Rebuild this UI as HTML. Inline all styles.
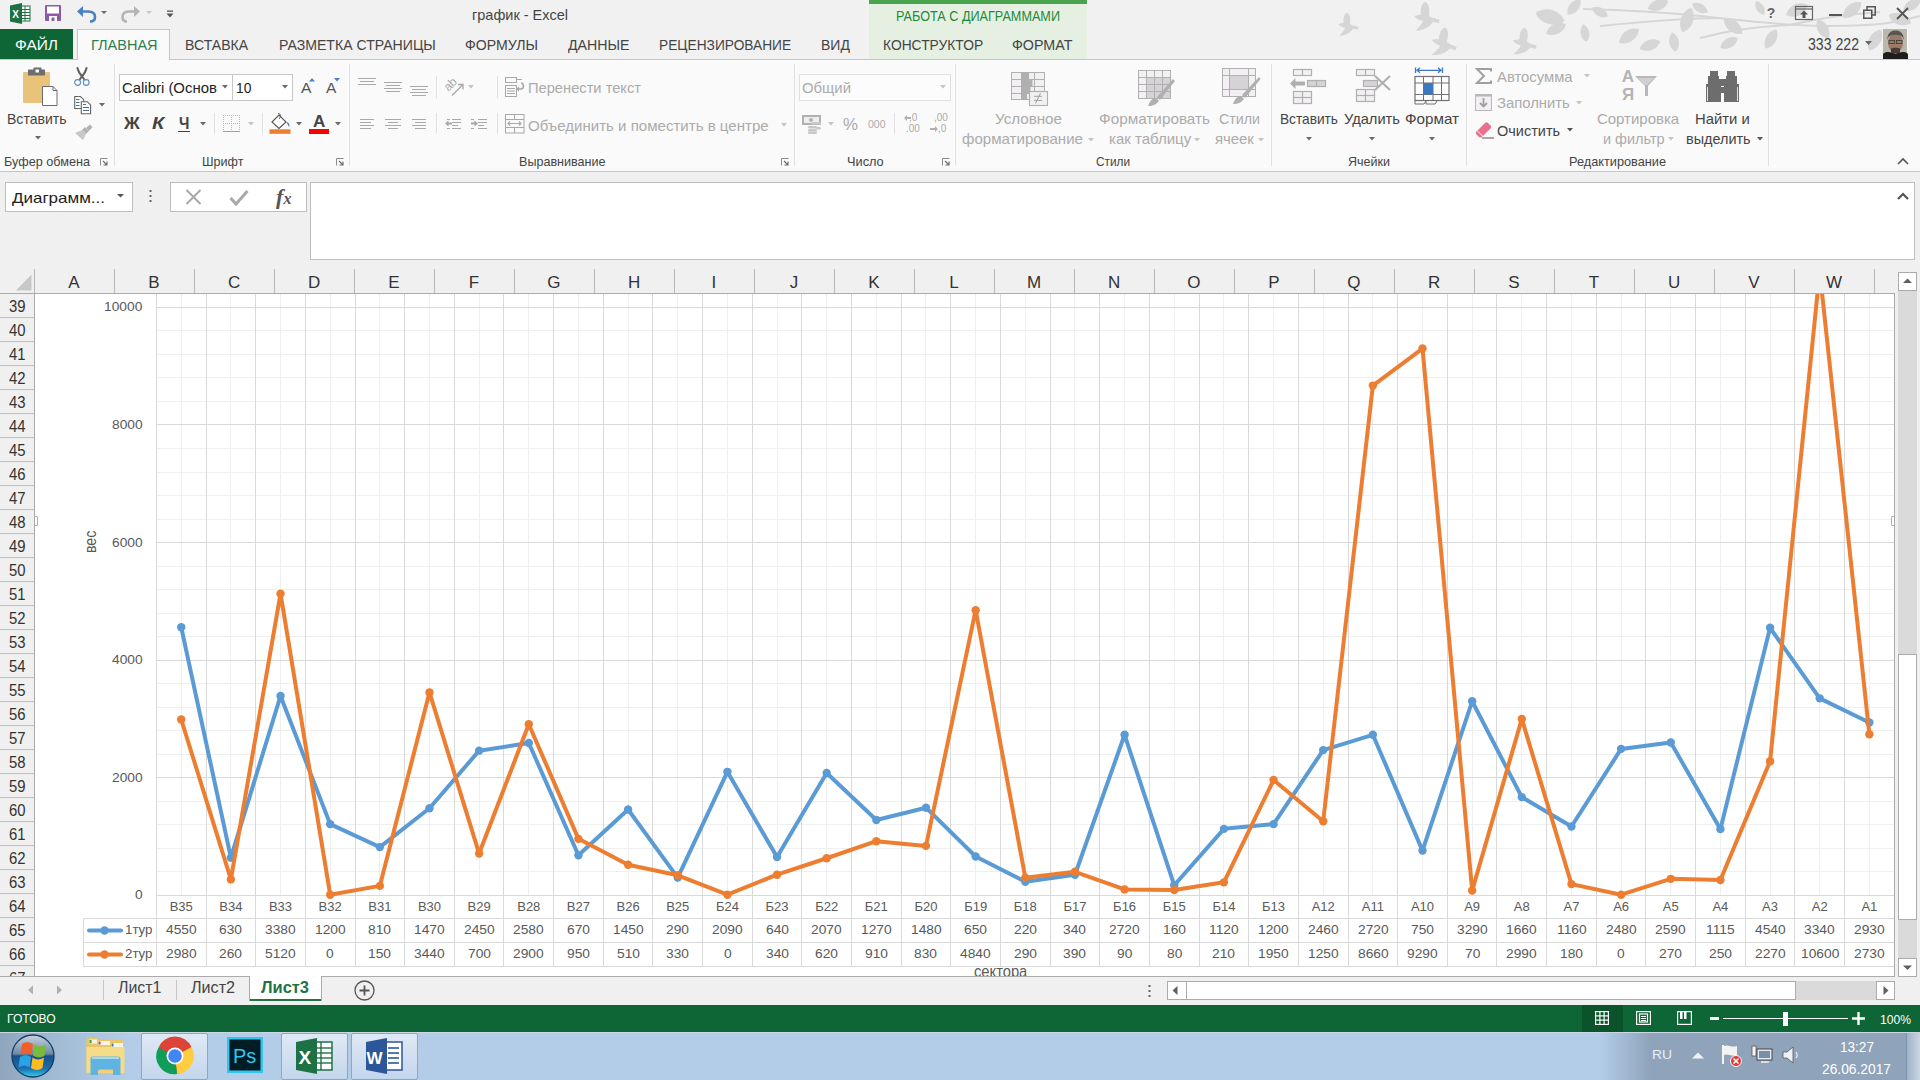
<!DOCTYPE html><html><head><meta charset="utf-8"><title>график - Excel</title><style>
*{margin:0;padding:0;box-sizing:border-box}
html,body{width:1920px;height:1080px;overflow:hidden;background:#f0f0f0;font-family:"Liberation Sans",sans-serif}
.t{position:absolute;white-space:nowrap;line-height:normal;transform-origin:0 0;font-family:"Liberation Sans",sans-serif}
svg{position:absolute;overflow:visible}
</style></head><body>
<div style="position:absolute;left:0px;top:0px;width:1920px;height:60px;background:#f1f1f1"></div>
<svg style="left:0;top:0" width="1920" height="59" viewBox="0 0 1920 59"><g fill="#d6d6d6">
<path transform="translate(1338 12) rotate(0) scale(0.8)" d="M0 15 C3 14 6 14 7 13 C6 8 8 2 11 1 C15 2 16 8 15 15 L19 17 L25.5 18.5 L25 22 L19 21 C17 24 12 29 2 30 C4 27 8 23 9 20 C6 19 2 18 0 15Z"/>
<path transform="translate(1414 1) rotate(0) scale(1.0)" d="M0 15 C3 14 6 14 7 13 C6 8 8 2 11 1 C15 2 16 8 15 15 L19 17 L25.5 18.5 L25 22 L19 21 C17 24 12 29 2 30 C4 27 8 23 9 20 C6 19 2 18 0 15Z"/>
<path transform="translate(1434 25) rotate(8) scale(1.0)" d="M0 15 C3 14 6 14 7 13 C6 8 8 2 11 1 C15 2 16 8 15 15 L19 17 L25.5 18.5 L25 22 L19 21 C17 24 12 29 2 30 C4 27 8 23 9 20 C6 19 2 18 0 15Z"/>
<path transform="translate(1514 26) rotate(5) scale(0.95)" d="M0 15 C3 14 6 14 7 13 C6 8 8 2 11 1 C15 2 16 8 15 15 L19 17 L25.5 18.5 L25 22 L19 21 C17 24 12 29 2 30 C4 27 8 23 9 20 C6 19 2 18 0 15Z"/>
<path transform="translate(1550 17) rotate(15)" d="M-15.0 0 C-7.5 -9.6 7.5 -9.6 15.0 0 C7.5 9.6 -7.5 9.6 -15.0 0Z"/>
<path transform="translate(1574 7) rotate(-50)" d="M-10.0 0 C-5.0 -6.4 5.0 -6.4 10.0 0 C5.0 6.4 -5.0 6.4 -10.0 0Z"/>
<path transform="translate(1556 29) rotate(-25)" d="M-11.0 0 C-5.5 -7.0 5.5 -7.0 11.0 0 C5.5 7.0 -5.5 7.0 -11.0 0Z"/>
<path transform="translate(1585 33) rotate(80)" d="M-9.0 0 C-4.5 -5.8 4.5 -5.8 9.0 0 C4.5 5.8 -4.5 5.8 -9.0 0Z"/>
<path transform="translate(1600 12) rotate(30)" d="M-9.0 0 C-4.5 -5.8 4.5 -5.8 9.0 0 C4.5 5.8 -4.5 5.8 -9.0 0Z"/>
<path transform="translate(1629 36) rotate(-35)" d="M-12.0 0 C-6.0 -7.7 6.0 -7.7 12.0 0 C6.0 7.7 -6.0 7.7 -12.0 0Z"/>
<path transform="translate(1650 45) rotate(-20)" d="M-11.0 0 C-5.5 -7.0 5.5 -7.0 11.0 0 C5.5 7.0 -5.5 7.0 -11.0 0Z"/>
<path transform="translate(1674 42) rotate(80)" d="M-10.0 0 C-5.0 -6.4 5.0 -6.4 10.0 0 C5.0 6.4 -5.0 6.4 -10.0 0Z"/>
<path transform="translate(1687 20) rotate(-70)" d="M-13.0 0 C-6.5 -8.3 6.5 -8.3 13.0 0 C6.5 8.3 -6.5 8.3 -13.0 0Z"/>
<path transform="translate(1658 5) rotate(-20)" d="M-11.0 0 C-5.5 -7.0 5.5 -7.0 11.0 0 C5.5 7.0 -5.5 7.0 -11.0 0Z"/>
<path transform="translate(1700 8) rotate(30)" d="M-9.0 0 C-4.5 -5.8 4.5 -5.8 9.0 0 C4.5 5.8 -4.5 5.8 -9.0 0Z"/>
<path transform="translate(1733 26) rotate(40)" d="M-12.0 0 C-6.0 -7.7 6.0 -7.7 12.0 0 C6.0 7.7 -6.0 7.7 -12.0 0Z"/>
<path transform="translate(1729 43) rotate(-30)" d="M-10.0 0 C-5.0 -6.4 5.0 -6.4 10.0 0 C5.0 6.4 -5.0 6.4 -10.0 0Z"/>
<path transform="translate(1771 39) rotate(-60)" d="M-11.0 0 C-5.5 -7.0 5.5 -7.0 11.0 0 C5.5 7.0 -5.5 7.0 -11.0 0Z"/>
<path transform="translate(1797 10) rotate(-25)" d="M-12.0 0 C-6.0 -7.7 6.0 -7.7 12.0 0 C6.0 7.7 -6.0 7.7 -12.0 0Z"/>
<path transform="translate(1823 29) rotate(60)" d="M-11.0 0 C-5.5 -7.0 5.5 -7.0 11.0 0 C5.5 7.0 -5.5 7.0 -11.0 0Z"/>
<path transform="translate(1852 10) rotate(-40)" d="M-12.0 0 C-6.0 -7.7 6.0 -7.7 12.0 0 C6.0 7.7 -6.0 7.7 -12.0 0Z"/>
<path transform="translate(1875 40) rotate(-60)" d="M-12.0 0 C-6.0 -7.7 6.0 -7.7 12.0 0 C6.0 7.7 -6.0 7.7 -12.0 0Z"/>
<path transform="translate(1900 19) rotate(20)" d="M-12.0 0 C-6.0 -7.7 6.0 -7.7 12.0 0 C6.0 7.7 -6.0 7.7 -12.0 0Z"/>
<path transform="translate(1912 5) rotate(-30)" d="M-10.0 0 C-5.0 -6.4 5.0 -6.4 10.0 0 C5.0 6.4 -5.0 6.4 -10.0 0Z"/>
<path transform="translate(1760 8) rotate(60)" d="M-8.0 0 C-4.0 -5.1 4.0 -5.1 8.0 0 C4.0 5.1 -4.0 5.1 -8.0 0Z"/>
</g><g stroke="#d6d6d6" stroke-width="2" fill="none">
<path d="M1583 9 C1620 10 1660 12 1700 16 S1780 26 1830 26 S1900 22 1920 16"/>
<path d="M1600 26 C1640 22 1680 18 1720 18"/><path d="M1700 38 C1730 30 1760 26 1790 25"/><path d="M1790 25 C1820 18 1850 14 1880 12"/>
</g></svg>
<svg style="left:10px;top:3px" width="21" height="21" viewBox="0 0 21 21">
<rect x="11" y="3" width="9" height="15" fill="#fff" stroke="#1e7145" stroke-width="1"/>
<g stroke="#1e7145" stroke-width="1"><line x1="11" y1="6.5" x2="20" y2="6.5"/><line x1="11" y1="9.5" x2="20" y2="9.5"/><line x1="11" y1="12.5" x2="20" y2="12.5"/><line x1="11" y1="15.5" x2="20" y2="15.5"/><line x1="15" y1="3" x2="15" y2="18"/></g>
<path d="M0 2.5 L12 0 L12 21 L0 18.5 Z" fill="#1e7145"/>
<text x="2.3" y="14.5" font-family="Liberation Sans" font-size="10" font-weight="bold" fill="#fff">X</text>
</svg>
<svg style="left:45px;top:5px" width="16" height="16" viewBox="0 0 16 16">
<rect x="0" y="0" width="16" height="16" rx="1" fill="#8d5aa8"/>
<rect x="2" y="1.5" width="12" height="7" fill="#fff"/>
<rect x="4" y="11" width="8" height="5" fill="#fff"/>
<rect x="6.5" y="12.5" width="3" height="3.5" fill="#8d5aa8"/>
</svg>
<svg style="left:76px;top:5px" width="34" height="18" viewBox="0 0 34 18">
<path d="M5 6.5 H12 C17 6.5 19 9 19 12 C19 15 17 16.5 14 16.5" stroke="#4a7fc1" stroke-width="2.6" fill="none"/>
<path d="M1 6.5 L7 1 L7 12 Z" fill="#4a7fc1"/>
<path d="M25 6 L31 6 L28 9 Z" fill="#6a6a6a"/>
</svg>
<svg style="left:121px;top:5px" width="34" height="18" viewBox="0 0 34 18">
<path d="M15 6.5 H8 C3 6.5 1.5 9 1.5 12 C1.5 15 3 16.5 6 16.5" stroke="#b4b4b4" stroke-width="2.6" fill="none"/>
<path d="M19 6.5 L13 1 L13 12 Z" fill="#b4b4b4"/>
<path d="M25 6 L31 6 L28 9 Z" fill="#c8c8c8"/>
</svg>
<svg style="left:166px;top:10px" width="8" height="8" viewBox="0 0 8 8">
<rect x="1" y="0.5" width="6" height="1.3" fill="#555"/><path d="M0.5 3.5 H7.5 L4 7.5Z" fill="#555"/></svg>
<div class="t" style="left:472.00px;top:6.22px;font-size:15px;color:#444;transform:scaleX(0.9653);">график - Excel</div>
<div style="position:absolute;left:869px;top:0px;width:218px;height:59px;background:#e5f0e3"></div>
<div style="position:absolute;left:869px;top:0px;width:218px;height:4px;background:#4aa44e"></div>
<div class="t" style="left:895.60px;top:7.73px;font-size:14px;color:#238a35;transform:scaleX(0.9032);">РАБОТА С ДИАГРАММАМИ</div>
<div class="t" style="left:1766.73px;top:5.33px;font-size:14px;color:#666;font-weight:bold;">?</div>
<svg style="left:1795px;top:6px" width="18" height="14" viewBox="0 0 18 14">
<rect x="0.5" y="0.5" width="17" height="13" fill="none" stroke="#666" stroke-width="1.2"/>
<line x1="1" y1="3" x2="17" y2="3" stroke="#666" stroke-width="1.2"/>
<path d="M9 4.5 L5 8.5 H7.5 V12 H10.5 V8.5 H13 Z" fill="#555"/></svg>
<div style="position:absolute;left:1829px;top:14px;width:13px;height:2px;background:#555"></div>
<svg style="left:1863px;top:6px" width="13" height="13" viewBox="0 0 13 13">
<rect x="0.75" y="4.25" width="8" height="8" fill="none" stroke="#555" stroke-width="1.5"/>
<path d="M4 4 V0.75 H12.25 V9 H9" fill="none" stroke="#555" stroke-width="1.5"/></svg>
<svg style="left:1896px;top:7px" width="13" height="13" viewBox="0 0 13 13">
<path d="M1 1 L12 12 M12 1 L1 12" stroke="#555" stroke-width="1.8"/></svg>
<div class="t" style="left:1808.00px;top:35.07px;font-size:16.5px;color:#444;transform:scaleX(0.8550);">333 222</div>
<svg style="left:1865px;top:41px" width="8" height="5"><path d="M0 0 H7 L3.5 4Z" fill="#666"/></svg>
<svg style="left:1883px;top:29px" width="25" height="30" viewBox="0 0 25 30">
<rect width="25" height="30" fill="#b9b7ae"/>
<rect x="24" y="0" width="1" height="30" fill="#fff"/>
<ellipse cx="12.5" cy="14" rx="7.5" ry="9.5" fill="#9c7a66"/>
<path d="M4.5 11 C4 4 8 1.5 12.5 1.5 C17 1.5 21 4 20.5 11 L19.5 8 C17 5 8 5 5.5 8Z" fill="#5a5550"/>
<rect x="6" y="11.5" width="5.5" height="3" fill="none" stroke="#3a3a3a" stroke-width="0.8"/><rect x="13.5" y="11.5" width="5.5" height="3" fill="none" stroke="#3a3a3a" stroke-width="0.8"/>
<path d="M8 19.5 C10 18.5 15 18.5 17 19.5 L17 23 C15 25 10 25 8 23Z" fill="#4a3a32"/>
<path d="M0 30 V25 C3 22 8 23 12.5 25 C17 23 22 22 25 25 V30Z" fill="#1e1e1e"/>
</svg>
<div style="position:absolute;left:0px;top:59px;width:1920px;height:1px;background:#c6c6c6"></div>
<div style="position:absolute;left:0px;top:29px;width:73px;height:30px;background:#0e6535"></div>
<div class="t" style="left:15.00px;top:35.82px;font-size:15px;color:#fff;transform:scaleX(1.0312);">ФАЙЛ</div>
<div style="position:absolute;left:77px;top:29px;width:93px;height:31px;background:#fafafa;border:1px solid #c6c6c6;border-bottom:none"></div>
<div class="t" style="left:90.50px;top:35.82px;font-size:15px;color:#2e7d50;transform:scaleX(0.9669);">ГЛАВНАЯ</div>
<div class="t" style="left:185.30px;top:35.82px;font-size:15px;color:#444;transform:scaleX(0.9394);">ВСТАВКА</div>
<div class="t" style="left:278.50px;top:35.82px;font-size:15px;color:#444;transform:scaleX(0.9392);">РАЗМЕТКА СТРАНИЦЫ</div>
<div class="t" style="left:465.20px;top:35.82px;font-size:15px;color:#444;transform:scaleX(0.9400);">ФОРМУЛЫ</div>
<div class="t" style="left:568.00px;top:35.82px;font-size:15px;color:#444;transform:scaleX(0.9447);">ДАННЫЕ</div>
<div class="t" style="left:659.20px;top:35.82px;font-size:15px;color:#444;transform:scaleX(0.9161);">РЕЦЕНЗИРОВАНИЕ</div>
<div class="t" style="left:821.40px;top:35.82px;font-size:15px;color:#444;transform:scaleX(0.9330);">ВИД</div>
<div class="t" style="left:882.50px;top:35.82px;font-size:15px;color:#444;transform:scaleX(0.9211);">КОНСТРУКТОР</div>
<div class="t" style="left:1012.00px;top:35.82px;font-size:15px;color:#444;transform:scaleX(0.9531);">ФОРМАТ</div>
<div style="position:absolute;left:0px;top:60px;width:1920px;height:111px;background:#fafafa"></div>
<div style="position:absolute;left:0px;top:171px;width:1920px;height:1px;background:#c6c6c6"></div>
<div style="position:absolute;left:114px;top:64px;width:1px;height:102px;background:#e1e1e1"></div>
<div style="position:absolute;left:349px;top:64px;width:1px;height:102px;background:#e1e1e1"></div>
<div style="position:absolute;left:794px;top:64px;width:1px;height:102px;background:#e1e1e1"></div>
<div style="position:absolute;left:955px;top:64px;width:1px;height:102px;background:#e1e1e1"></div>
<div style="position:absolute;left:1271px;top:64px;width:1px;height:102px;background:#e1e1e1"></div>
<div style="position:absolute;left:1466px;top:64px;width:1px;height:102px;background:#e1e1e1"></div>
<div style="position:absolute;left:1768px;top:64px;width:1px;height:102px;background:#e1e1e1"></div>
<div class="t" style="left:4.30px;top:154.24px;font-size:13px;color:#444;transform:scaleX(0.9740);">Буфер обмена</div>
<div class="t" style="left:201.50px;top:154.24px;font-size:13px;color:#444;transform:scaleX(0.9703);">Шрифт</div>
<div class="t" style="left:519.00px;top:154.24px;font-size:13px;color:#444;transform:scaleX(0.9664);">Выравнивание</div>
<div class="t" style="left:847.00px;top:154.24px;font-size:13px;color:#444;transform:scaleX(0.9819);">Число</div>
<div class="t" style="left:1096.00px;top:154.24px;font-size:13px;color:#444;transform:scaleX(0.9081);">Стили</div>
<div class="t" style="left:1348.00px;top:154.24px;font-size:13px;color:#444;transform:scaleX(0.9630);">Ячейки</div>
<div class="t" style="left:1569.00px;top:154.24px;font-size:13px;color:#444;transform:scaleX(0.9792);">Редактирование</div>
<svg style="left:100px;top:158px" width="8" height="8" viewBox="0 0 8 8"><path d="M0.5 7.5 V0.5 H7.5" fill="none" stroke="#8a8a8a" stroke-width="1"/><path d="M3 3 L6.5 6.5 M7 3.5 V7 H3.5" fill="none" stroke="#6a6a6a" stroke-width="1.1"/></svg>
<svg style="left:336px;top:158px" width="8" height="8" viewBox="0 0 8 8"><path d="M0.5 7.5 V0.5 H7.5" fill="none" stroke="#8a8a8a" stroke-width="1"/><path d="M3 3 L6.5 6.5 M7 3.5 V7 H3.5" fill="none" stroke="#6a6a6a" stroke-width="1.1"/></svg>
<svg style="left:781px;top:158px" width="8" height="8" viewBox="0 0 8 8"><path d="M0.5 7.5 V0.5 H7.5" fill="none" stroke="#8a8a8a" stroke-width="1"/><path d="M3 3 L6.5 6.5 M7 3.5 V7 H3.5" fill="none" stroke="#6a6a6a" stroke-width="1.1"/></svg>
<svg style="left:942px;top:158px" width="8" height="8" viewBox="0 0 8 8"><path d="M0.5 7.5 V0.5 H7.5" fill="none" stroke="#8a8a8a" stroke-width="1"/><path d="M3 3 L6.5 6.5 M7 3.5 V7 H3.5" fill="none" stroke="#6a6a6a" stroke-width="1.1"/></svg>
<svg style="left:1897px;top:157px" width="12" height="8"><path d="M1 7 L6 2 L11 7" fill="none" stroke="#555" stroke-width="1.6"/></svg>
<svg style="left:22px;top:67px" width="36" height="40" viewBox="0 0 36 40">
<rect x="1" y="5" width="27" height="31" rx="1" fill="#eac37a"/>
<rect x="6" y="2.5" width="17" height="6" rx="0.5" fill="#6d6d6d"/>
<rect x="11.5" y="0.5" width="8" height="5" rx="0.5" fill="#6d6d6d"/>
<rect x="13.5" y="2.5" width="3.5" height="3" fill="#fff"/>
<path d="M20.5 19.5 H31 L35 23.5 V38.5 H20.5 Z" fill="#fff" stroke="#6d6d6d" stroke-width="1"/>
<path d="M31 19.5 V23.5 H35" fill="none" stroke="#6d6d6d" stroke-width="1"/>
</svg>
<div class="t" style="left:7.00px;top:110.33px;font-size:15px;color:#444;transform:scaleX(0.9355);">Вставить</div>
<svg style="left:34.5px;top:136px" width="6" height="4"><path d="M0 0 H6 L3.0 3.5Z" fill="#6a6a6a"/></svg>
<svg style="left:70px;top:64px" width="24" height="24" viewBox="0 0 24 24">
<path d="M7.5 4 C8 7 10 10 12.5 13 L15 16.5 M16.5 4 C16 7 14 10 11.5 13 L9 16.5" stroke="#5f5f5f" stroke-width="2" fill="none" stroke-linecap="round"/>
<circle cx="7.6" cy="18.5" r="2.9" fill="#fff" stroke="#5a8ac6" stroke-width="1.1"/>
<circle cx="16.2" cy="18.5" r="2.9" fill="#fff" stroke="#5a8ac6" stroke-width="1.1"/>
</svg>
<svg style="left:70px;top:94px" width="24" height="22" viewBox="0 0 24 22">
<path d="M4.7 2.5 H10.5 L13.7 5.7 V14.5 H4.7Z" fill="#fff" stroke="#666" stroke-width="1.1"/>
<path d="M11.3 7.7 H17.3 L20.6 11 V19.7 H11.3Z" fill="#fff" stroke="#666" stroke-width="1.1"/>
<g stroke="#4f6f94" stroke-width="1"><line x1="6" y1="5.5" x2="9.5" y2="5.5"/><line x1="6" y1="8.5" x2="9.5" y2="8.5"/><line x1="6" y1="11.5" x2="9.5" y2="11.5"/>
<line x1="13" y1="10.5" x2="16" y2="10.5"/><line x1="13" y1="13.5" x2="19" y2="13.5"/><line x1="13" y1="16.5" x2="19" y2="16.5"/></g>
</svg>
<svg style="left:99px;top:103px" width="6" height="4"><path d="M0 0 H6 L3.0 3.5Z" fill="#6a6a6a"/></svg>
<svg style="left:74px;top:124px" width="19" height="17" viewBox="0 0 19 17">
<path d="M1 9 L8 6 L12 10 L9 16 Z" fill="#c8c8c8"/>
<path d="M8 6 L12 10 L15 7 L11 3Z" fill="#b3b3b3"/>
<path d="M12 4 L16 0.5 L18.5 3 L15 7Z" fill="#b3b3b3"/>
</svg>
<div style="position:absolute;left:119px;top:74px;width:114px;height:27px;background:#fff;border:1px solid #c6c6c6"></div>
<div style="position:absolute;left:232px;top:74px;width:61px;height:27px;background:#fff;border:1px solid #c6c6c6"></div>
<div class="t" style="left:122.30px;top:79.33px;font-size:15px;color:#222;transform:scaleX(0.9940);">Calibri (Основ</div>
<svg style="left:222px;top:85px" width="6" height="4"><path d="M0 0 H6 L3.0 3.5Z" fill="#6a6a6a"/></svg>
<div class="t" style="left:236.20px;top:79.33px;font-size:15px;color:#222;transform:scaleX(0.9189);">10</div>
<svg style="left:282px;top:85px" width="6" height="4"><path d="M0 0 H6 L3.0 3.5Z" fill="#6a6a6a"/></svg>
<div class="t" style="left:301.00px;top:79.33px;font-size:15px;color:#555;transform:scaleX(1.0448);">A</div>
<svg style="left:309px;top:78px" width="7" height="4"><path d="M0 3.5 H6 L3 0Z" fill="#4a7fc1"/></svg>
<div class="t" style="left:326.10px;top:79.33px;font-size:15px;color:#555;transform:scaleX(1.0348);">A</div>
<svg style="left:334px;top:78px" width="7" height="4"><path d="M0 0 H6 L3 3.5Z" fill="#4a7fc1"/></svg>
<div class="t" style="left:124.29px;top:115.42px;font-size:16px;color:#444;font-weight:bold;transform:scaleX(1.0861);">Ж</div>
<div class="t" style="left:151.70px;top:115.42px;font-size:16px;color:#444;font-weight:bold;transform:scaleX(1.2500);font-style:italic;">К</div>
<div class="t" style="left:178.60px;top:115.42px;font-size:16px;color:#444;font-weight:bold;transform:scaleX(0.9220);">Ч</div>
<div style="position:absolute;left:178px;top:131px;width:12px;height:1.3px;background:#444"></div>
<svg style="left:200px;top:122px" width="6" height="4"><path d="M0 0 H6 L3.0 3.5Z" fill="#6a6a6a"/></svg>
<div style="position:absolute;left:214px;top:113px;width:1px;height:21px;background:#e1e1e1"></div>
<svg style="left:223px;top:115px" width="17" height="17" viewBox="0 0 17 17">
<g stroke="#b8b8b8" stroke-width="1" stroke-dasharray="1 1" fill="none" shape-rendering="crispEdges">
<line x1="0.5" y1="0" x2="0.5" y2="16"/><line x1="16.5" y1="0" x2="16.5" y2="16"/><line x1="0" y1="0.5" x2="17" y2="0.5"/>
<line x1="8.5" y1="0" x2="8.5" y2="16"/><line x1="0" y1="8.5" x2="17" y2="8.5"/></g>
<line x1="0" y1="16.5" x2="17" y2="16.5" stroke="#a0a0a0" stroke-width="1" shape-rendering="crispEdges"/></svg>
<svg style="left:248px;top:122px" width="6" height="4"><path d="M0 0 H6 L3.0 3.5Z" fill="#c4c4c4"/></svg>
<div style="position:absolute;left:262px;top:113px;width:1px;height:21px;background:#e1e1e1"></div>
<svg style="left:269px;top:113px" width="22" height="21" viewBox="0 0 22 21">
<path d="M3 9 L10 2 L17 9 L10 15.5 Z" fill="#fff" stroke="#555" stroke-width="1.1"/>
<path d="M9 0.5 C12 0.5 12 4 10 6" fill="none" stroke="#555" stroke-width="1"/>
<path d="M17 9 C20 9 21 12 20 14 L18.5 11Z" fill="#4a7fc1"/>
<rect x="0.5" y="16.3" width="21" height="4.5" fill="#ed7d31"/></svg>
<svg style="left:296px;top:122px" width="6" height="4"><path d="M0 0 H6 L3.0 3.5Z" fill="#6a6a6a"/></svg>
<div class="t" style="left:312.70px;top:112.47px;font-size:16.5px;color:#444;font-weight:bold;transform:scaleX(1.0354);">A</div>
<div style="position:absolute;left:309px;top:129px;width:20px;height:5px;background:#ff0000"></div>
<svg style="left:335px;top:122px" width="6" height="4"><path d="M0 0 H6 L3.0 3.5Z" fill="#6a6a6a"/></svg>
<div style="position:absolute;left:358px;top:78px;width:18px;height:1px;background:#a8a8a8"></div>
<div style="position:absolute;left:360px;top:81px;width:14px;height:1px;background:#a8a8a8"></div>
<div style="position:absolute;left:358px;top:84px;width:18px;height:1px;background:#a8a8a8"></div>
<div style="position:absolute;left:384px;top:82px;width:18px;height:1px;background:#a8a8a8"></div>
<div style="position:absolute;left:386px;top:85px;width:14px;height:1px;background:#a8a8a8"></div>
<div style="position:absolute;left:384px;top:88px;width:18px;height:1px;background:#a8a8a8"></div>
<div style="position:absolute;left:386px;top:91px;width:14px;height:1px;background:#a8a8a8"></div>
<div style="position:absolute;left:410px;top:86px;width:18px;height:1px;background:#a8a8a8"></div>
<div style="position:absolute;left:412px;top:89px;width:14px;height:1px;background:#a8a8a8"></div>
<div style="position:absolute;left:410px;top:92px;width:18px;height:1px;background:#a8a8a8"></div>
<div style="position:absolute;left:412px;top:95px;width:14px;height:1px;background:#a8a8a8"></div>
<div style="position:absolute;left:360px;top:119px;width:14px;height:1px;background:#a8a8a8"></div>
<div style="position:absolute;left:360px;top:122px;width:11px;height:1px;background:#a8a8a8"></div>
<div style="position:absolute;left:360px;top:125px;width:14px;height:1px;background:#a8a8a8"></div>
<div style="position:absolute;left:360px;top:128px;width:11px;height:1px;background:#a8a8a8"></div>
<div style="position:absolute;left:385px;top:119px;width:16px;height:1px;background:#a8a8a8"></div>
<div style="position:absolute;left:388px;top:122px;width:10px;height:1px;background:#a8a8a8"></div>
<div style="position:absolute;left:385px;top:125px;width:16px;height:1px;background:#a8a8a8"></div>
<div style="position:absolute;left:388px;top:128px;width:10px;height:1px;background:#a8a8a8"></div>
<div style="position:absolute;left:412px;top:119px;width:14px;height:1px;background:#a8a8a8"></div>
<div style="position:absolute;left:415px;top:122px;width:11px;height:1px;background:#a8a8a8"></div>
<div style="position:absolute;left:412px;top:125px;width:14px;height:1px;background:#a8a8a8"></div>
<div style="position:absolute;left:415px;top:128px;width:11px;height:1px;background:#a8a8a8"></div>
<div style="position:absolute;left:436px;top:76px;width:1px;height:22px;background:#e1e1e1"></div>
<div style="position:absolute;left:436px;top:113px;width:1px;height:21px;background:#e1e1e1"></div>
<div style="position:absolute;left:497px;top:76px;width:1px;height:22px;background:#e1e1e1"></div>
<div style="position:absolute;left:497px;top:113px;width:1px;height:21px;background:#e1e1e1"></div>
<svg style="left:443px;top:77px" width="22" height="20" viewBox="0 0 22 20">
<text x="8" y="11" font-family="Liberation Sans" font-size="12" fill="#a8a8a8" text-anchor="middle" transform="rotate(-45 8 8)">ab</text>
<path d="M9 18.5 L19.5 8 M15 7.5 H20 V12.5" fill="none" stroke="#a8a8a8" stroke-width="1.3"/></svg>
<svg style="left:468px;top:85px" width="6" height="4"><path d="M0 0 H6 L3.0 3.5Z" fill="#c4c4c4"/></svg>
<svg style="left:445px;top:119px" width="19" height="11" viewBox="0 0 19 11"><g fill="#a8a8a8">
<rect x="2" y="0" width="3" height="1"/><rect x="7" y="0" width="9" height="1"/><rect x="7" y="3" width="9" height="1"/><rect x="7" y="6" width="6" height="1"/>
<rect x="2" y="9" width="3" height="1"/><rect x="7" y="9" width="9" height="1"/><path d="M0 4.5 L3.5 1.5 V3.5 H7 V5.5 H3.5 V7.5Z"/></g></svg>
<svg style="left:471px;top:119px" width="19" height="11" viewBox="0 0 19 11"><g fill="#a8a8a8">
<rect x="0" y="0" width="3" height="1"/><rect x="7" y="0" width="9" height="1"/><rect x="7" y="3" width="9" height="1"/><rect x="7" y="6" width="6" height="1"/>
<rect x="0" y="9" width="3" height="1"/><rect x="7" y="9" width="9" height="1"/><path d="M7 4.5 L3.5 1.5 V3.5 H0 V5.5 H3.5 V7.5Z"/></g></svg>
<svg style="left:505px;top:77px" width="21" height="20" viewBox="0 0 21 20">
<g fill="none" stroke="#a8a8a8" stroke-width="1">
<rect x="0.5" y="0.5" width="11" height="5"/><line x1="11.5" y1="2.5" x2="17" y2="2.5"/>
<rect x="0.5" y="8.5" width="11" height="11"/><line x1="2" y1="11.5" x2="10" y2="11.5"/><line x1="2" y1="14" x2="10" y2="14"/><line x1="2" y1="16.5" x2="10" y2="16.5"/>
<path d="M12 12 H16 C19 12 19.5 6 16 6" stroke-width="1.6"/></g>
<path d="M11 12 L14 9.5 V14.5Z" fill="#a8a8a8"/></svg>
<div class="t" style="left:528.00px;top:79.22px;font-size:15px;color:#ababab;transform:scaleX(0.9784);">Перенести текст</div>
<svg style="left:505px;top:114px" width="20" height="20" viewBox="0 0 20 20">
<g fill="none" stroke="#a8a8a8" stroke-width="1">
<rect x="0.5" y="0.5" width="18.5" height="18.5"/><line x1="0" y1="5.5" x2="19" y2="5.5"/><line x1="0" y1="13.5" x2="19" y2="13.5"/>
<line x1="9.5" y1="0" x2="9.5" y2="5.5"/><line x1="9.5" y1="13.5" x2="9.5" y2="19"/>
<path d="M3 9.5 H16 M5 7.5 L3 9.5 L5 11.5 M14 7.5 L16 9.5 L14 11.5" stroke-width="1.1"/></g></svg>
<div class="t" style="left:528.00px;top:116.73px;font-size:15px;color:#ababab;transform:scaleX(1.0034);">Объединить и поместить в центре</div>
<svg style="left:781px;top:123px" width="6" height="4"><path d="M0 0 H6 L3.0 3.5Z" fill="#c4c4c4"/></svg>
<div style="position:absolute;left:799px;top:74px;width:152px;height:27px;background:#fcfcfc;border:1px solid #e1e1e1"></div>
<div class="t" style="left:802.30px;top:79.33px;font-size:15px;color:#ababab;transform:scaleX(0.9929);">Общий</div>
<svg style="left:940px;top:85px" width="6" height="4"><path d="M0 0 H6 L3.0 3.5Z" fill="#c4c4c4"/></svg>
<svg style="left:802px;top:115px" width="20" height="19" viewBox="0 0 20 19">
<rect x="0" y="0" width="19" height="10" fill="#b0b0b0"/><rect x="2" y="2" width="15" height="6" fill="#eee"/>
<circle cx="9" cy="5" r="2" fill="#b0b0b0"/>
<g fill="#c8c8c8"><rect x="10" y="7" width="9" height="2.5" rx="1.2"/><rect x="6" y="11" width="9" height="2.5" rx="1.2"/><rect x="6" y="14" width="9" height="2.5" rx="1.2"/><rect x="6" y="16.5" width="9" height="2.5" rx="1.2"/><rect x="14" y="12" width="5" height="2.5" rx="1.2"/></g></svg>
<svg style="left:828px;top:122px" width="6" height="4"><path d="M0 0 H6 L3.0 3.5Z" fill="#c4c4c4"/></svg>
<div class="t" style="left:843.10px;top:115.31px;font-size:17px;color:#ababab;transform:scaleX(0.9914);">%</div>
<div class="t" style="left:867.60px;top:117.75px;font-size:11px;color:#ababab;transform:scaleX(0.9581);">000</div>
<div style="position:absolute;left:894px;top:113px;width:1px;height:21px;background:#e1e1e1"></div>
<div class="t" style="left:909.00px;top:112.45px;font-size:10px;color:#ababab;">,0</div>
<div class="t" style="left:906.00px;top:122.95px;font-size:10px;color:#ababab;">.00</div>
<svg style="left:904px;top:115px" width="7" height="6"><path d="M0 3 L3 0 V2 H7 V4 H3 V6Z" fill="#b0b0b0"/></svg>
<div class="t" style="left:934.00px;top:112.45px;font-size:10px;color:#ababab;">,00</div>
<div class="t" style="left:938.00px;top:122.95px;font-size:10px;color:#ababab;">,0</div>
<svg style="left:930px;top:126px" width="8" height="6"><path d="M8 3 L5 0 V2 H0 V4 H5 V6Z" fill="#b0b0b0"/></svg>
<svg style="left:1000px;top:60px" width="60" height="50" viewBox="1000 60 60 50">
<rect x="1011.5" y="72.5" width="33" height="27" fill="#f3f0f3" stroke="#b0b0b0" stroke-width="1"/>
<g fill="#b0b0b0"><rect x="1022" y="73" width="7" height="6.5"/><rect x="1022" y="80" width="10.5" height="6.5"/><rect x="1022" y="87" width="8.5" height="6.5"/><rect x="1022" y="94" width="5" height="6"/></g>
<g stroke="#b0b0b0" stroke-width="1" shape-rendering="crispEdges"><line x1="1011" y1="79.5" x2="1045" y2="79.5"/><line x1="1011" y1="86.5" x2="1045" y2="86.5"/><line x1="1011" y1="93.5" x2="1045" y2="93.5"/>
<line x1="1021.5" y1="72" x2="1021.5" y2="100"/><line x1="1034.5" y1="72" x2="1034.5" y2="100"/></g>
<rect x="1029.5" y="91.5" width="18" height="14" fill="#f3f0f3" stroke="#b0b0b0" stroke-width="1.1"/>
<path d="M1034 96.3 H1042 M1034 100.4 H1042 M1040.5 93 L1035.5 103.5" stroke="#a0a0a0" stroke-width="1"/></svg>
<svg style="left:1138px;top:70px" width="40" height="37" viewBox="0 0 40 37">
<rect x="0.5" y="0.5" width="32" height="28" fill="#f3f0f3" stroke="#b0b0b0"/>
<rect x="8" y="7" width="24" height="21" fill="#d6d3d6"/>
<g stroke="#b0b0b0" stroke-width="1"><line x1="0" y1="7.5" x2="33" y2="7.5"/><line x1="0" y1="14.5" x2="33" y2="14.5"/><line x1="0" y1="21.5" x2="33" y2="21.5"/>
<line x1="8.5" y1="0" x2="8.5" y2="29"/><line x1="16.5" y1="0" x2="16.5" y2="29"/><line x1="24.5" y1="0" x2="24.5" y2="29"/></g>
<path d="M10 36 C12 31 14 28 18 28 L21 31 C19 34 15 36 10 36Z" fill="#b0b0b0"/>
<path d="M19 27 L35 9 L37 11 L22 30Z" fill="#b0b0b0"/></svg>
<svg style="left:1222px;top:68px" width="40" height="37" viewBox="0 0 40 37">
<rect x="0.5" y="0.5" width="33" height="28" fill="#f3f0f3" stroke="#b0b0b0"/>
<rect x="7" y="7" width="19" height="14" fill="#d6d3d6"/>
<g stroke="#b0b0b0" stroke-width="1"><line x1="0" y1="7.5" x2="34" y2="7.5"/><line x1="0" y1="21.5" x2="34" y2="21.5"/>
<line x1="7.5" y1="0" x2="7.5" y2="29"/><line x1="26.5" y1="0" x2="26.5" y2="29"/></g>
<path d="M11 36 C13 31 15 28 19 28 L22 31 C20 34 16 36 11 36Z" fill="#b0b0b0"/>
<path d="M20 27 L37 9 L38.5 11 L23 30Z" fill="#b0b0b0"/></svg>
<div class="t" style="left:995.00px;top:110.42px;font-size:15px;color:#ababab;transform:scaleX(1.0117);">Условное</div>
<div class="t" style="left:962.00px;top:130.43px;font-size:15px;color:#ababab;transform:scaleX(1.0046);">форматирование</div>
<div class="t" style="left:1099.00px;top:110.42px;font-size:15px;color:#ababab;transform:scaleX(1.0200);">Форматировать</div>
<div class="t" style="left:1109.00px;top:130.43px;font-size:15px;color:#ababab;">как таблицу</div>
<div class="t" style="left:1219.00px;top:110.42px;font-size:15px;color:#ababab;transform:scaleX(0.9491);">Стили</div>
<div class="t" style="left:1215.00px;top:130.43px;font-size:15px;color:#ababab;transform:scaleX(0.9924);">ячеек</div>
<svg style="left:1088px;top:138px" width="6" height="4"><path d="M0 0 H6 L3.0 3.5Z" fill="#c4c4c4"/></svg>
<svg style="left:1194px;top:138px" width="6" height="4"><path d="M0 0 H6 L3.0 3.5Z" fill="#c4c4c4"/></svg>
<svg style="left:1258px;top:138px" width="6" height="4"><path d="M0 0 H6 L3.0 3.5Z" fill="#c4c4c4"/></svg>
<svg style="left:1289px;top:68px" width="40" height="37" viewBox="0 0 40 37">
<g fill="#f3f0f3" stroke="#b0b0b0" stroke-width="1.2">
<rect x="4.5" y="1.5" width="18" height="6"/><line x1="13.5" y1="1.5" x2="13.5" y2="7.5"/>
<rect x="4.5" y="23.5" width="18" height="12"/><line x1="13.5" y1="23.5" x2="13.5" y2="35.5"/><line x1="4.5" y1="29.5" x2="22.5" y2="29.5"/></g>
<rect x="18.5" y="12.5" width="18" height="6" fill="#d6d3d6" stroke="#b0b0b0" stroke-width="1.2"/><line x1="27.5" y1="12.5" x2="27.5" y2="18.5" stroke="#b0b0b0" stroke-width="1.2"/>
<path d="M1 15.5 L6.5 10 V13.5 H16 V17.5 H6.5 V21Z" fill="#b0b0b0"/></svg>
<svg style="left:1355px;top:68px" width="40" height="37" viewBox="0 0 40 37">
<g fill="#f3f0f3" stroke="#b0b0b0" stroke-width="1.2">
<rect x="1.5" y="1.5" width="18" height="6"/><line x1="10.5" y1="1.5" x2="10.5" y2="7.5"/>
<rect x="1.5" y="21.5" width="18" height="12"/><line x1="10.5" y1="21.5" x2="10.5" y2="33.5"/><line x1="1.5" y1="27.5" x2="19.5" y2="27.5"/></g>
<rect x="8.5" y="12.5" width="14" height="6" fill="#d6d3d6" stroke="#b0b0b0" stroke-width="1.2"/>
<path d="M20 8 L35 22 M35 8 L20 22" stroke="#b0b0b0" stroke-width="2.2"/></svg>
<svg style="left:1414px;top:67px" width="37" height="38" viewBox="0 0 37 38">
<path d="M1.5 0.5 V6 M28.5 0.5 V6 M3 3.3 H27 M6 0.8 L3 3.3 L6 5.8 M24 0.8 L27 3.3 L24 5.8" fill="none" stroke="#3c78c0" stroke-width="1.3"/>
<rect x="1" y="9.5" width="34" height="24" fill="#fff" stroke="#707070" stroke-width="1.2"/>
<g stroke="#707070" stroke-width="1"><line x1="1" y1="16" x2="35" y2="16"/><line x1="1" y1="27.5" x2="35" y2="27.5"/>
<line x1="9.5" y1="9.5" x2="9.5" y2="33.5"/><line x1="19" y1="9.5" x2="19" y2="33.5"/><line x1="27.5" y1="9.5" x2="27.5" y2="33.5"/></g>
<rect x="10" y="16" width="9" height="11.5" fill="#3c78c0"/>
<path d="M1 33.5 V37 H10 L12 34 M12 34 V37 H21 L23 34" fill="none" stroke="#707070" stroke-width="1"/></svg>
<div class="t" style="left:1280.00px;top:110.42px;font-size:15px;color:#444;transform:scaleX(0.9119);">Вставить</div>
<div class="t" style="left:1344.00px;top:110.42px;font-size:15px;color:#444;transform:scaleX(0.9773);">Удалить</div>
<div class="t" style="left:1405.00px;top:110.42px;font-size:15px;color:#444;transform:scaleX(1.0141);">Формат</div>
<svg style="left:1306px;top:137px" width="6" height="4"><path d="M0 0 H6 L3.0 3.5Z" fill="#6a6a6a"/></svg>
<svg style="left:1369px;top:137px" width="6" height="4"><path d="M0 0 H6 L3.0 3.5Z" fill="#6a6a6a"/></svg>
<svg style="left:1429px;top:137px" width="6" height="4"><path d="M0 0 H6 L3.0 3.5Z" fill="#6a6a6a"/></svg>
<svg style="left:1476px;top:68px" width="16" height="16" viewBox="0 0 16 16">
<path d="M15 3.5 V1 H1 L8 8 L1 15 H15 V12.5" fill="none" stroke="#a0a0a0" stroke-width="2"/></svg>
<div class="t" style="left:1497.40px;top:68.12px;font-size:15px;color:#ababab;transform:scaleX(0.9886);">Автосумма</div>
<svg style="left:1584px;top:74px" width="6" height="4"><path d="M0 0 H6 L3.0 3.5Z" fill="#c4c4c4"/></svg>
<svg style="left:1475px;top:94px" width="18" height="18" viewBox="0 0 18 18">
<rect x="0.5" y="0.5" width="16" height="16" fill="#f3f0f3" stroke="#b8b8b8"/><rect x="0.5" y="0.5" width="16" height="2" fill="#b8b8b8"/>
<path d="M8.5 4 V12 M5 9 L8.5 12.5 L12 9" fill="none" stroke="#a0a0a0" stroke-width="1.8"/></svg>
<div class="t" style="left:1497.40px;top:94.33px;font-size:15px;color:#ababab;transform:scaleX(0.9885);">Заполнить</div>
<svg style="left:1576px;top:101px" width="6" height="4"><path d="M0 0 H6 L3.0 3.5Z" fill="#c4c4c4"/></svg>
<svg style="left:1475px;top:121px" width="20" height="18" viewBox="0 0 20 18">
<path d="M1 11 L10 2 Q11.5 0.5 13 2 L15.5 4.5 Q17 6 15.5 7.5 L7 16 Q5.5 17.2 4 16 L1.5 13.5 Q0.2 12.2 1 11Z" fill="#e8718b"/>
<path d="M2.5 10 L8.5 16" stroke="#fff" stroke-width="1"/>
<line x1="7" y1="17" x2="19" y2="17" stroke="#555" stroke-width="1"/></svg>
<div class="t" style="left:1497.40px;top:122.02px;font-size:15px;color:#444;transform:scaleX(0.9659);">Очистить</div>
<svg style="left:1567px;top:128px" width="6" height="4"><path d="M0 0 H6 L3.0 3.5Z" fill="#555"/></svg>
<svg style="left:1621px;top:68px" width="38" height="33" viewBox="0 0 38 33">
<text x="7" y="14" font-family="Liberation Sans" font-size="17" font-weight="bold" fill="#b4b4b4" text-anchor="middle">А</text>
<text x="7" y="31.5" font-family="Liberation Sans" font-size="17" font-weight="bold" fill="#b4b4b4" text-anchor="middle">Я</text>
<path d="M14 8 H36 L27 18 V28 H24 V18Z" fill="#b8b8b8"/><path d="M17 10 H33 L26.5 17 H23.5Z" fill="#d0d0d0"/></svg>
<div class="t" style="left:1597.30px;top:110.42px;font-size:15px;color:#ababab;transform:scaleX(0.9970);">Сортировка</div>
<div class="t" style="left:1602.50px;top:130.12px;font-size:15px;color:#ababab;transform:scaleX(0.9656);">и фильтр</div>
<div class="t" style="left:1695.40px;top:110.42px;font-size:15px;color:#444;transform:scaleX(0.9901);">Найти и</div>
<div class="t" style="left:1685.60px;top:130.12px;font-size:15px;color:#444;transform:scaleX(0.9613);">выделить</div>
<svg style="left:1668px;top:137px" width="6" height="4"><path d="M0 0 H6 L3.0 3.5Z" fill="#c4c4c4"/></svg>
<svg style="left:1757px;top:137px" width="6" height="4"><path d="M0 0 H6 L3.0 3.5Z" fill="#555"/></svg>
<svg style="left:1705px;top:71px" width="36" height="31" viewBox="0 0 36 31">
<g fill="#6d6d6d">
<rect x="5" y="0" width="8" height="5"/><rect x="22" y="0" width="8" height="5"/>
<rect x="3" y="5" width="11" height="8"/><rect x="21" y="5" width="11" height="8"/>
<rect x="1" y="13" width="15" height="18"/><rect x="19" y="13" width="15" height="18"/>
<rect x="14" y="8" width="7" height="7"/><rect x="16" y="16" width="3" height="6"/></g>
<g stroke="#fff" stroke-width="0.8"><line x1="2.5" y1="16" x2="2.5" y2="30"/><line x1="32.5" y1="16" x2="32.5" y2="30"/></g></svg>
<div style="position:absolute;left:5px;top:182px;width:128px;height:30px;background:#fff;border:1px solid #bdbdbd"></div>
<div class="t" style="left:12.00px;top:189.43px;font-size:15px;color:#222;transform:scaleX(1.1314);">Диаграмм...</div>
<svg style="left:117px;top:194px" width="7" height="4"><path d="M0 0 H7 L3.5 3.5Z" fill="#555"/></svg>
<svg style="left:149px;top:190px" width="4" height="13"><g fill="#666"><rect x="0.5" y="0" width="2" height="2"/><rect x="0.5" y="5" width="2" height="2"/><rect x="0.5" y="10" width="2" height="2"/></g></svg>
<div style="position:absolute;left:170px;top:182px;width:137px;height:30px;background:#fff;border:1px solid #bdbdbd"></div>
<svg style="left:185px;top:189px" width="17" height="16"><path d="M1.5 1 L15.5 15 M15.5 1 L1.5 15" stroke="#a8a8a8" stroke-width="2"/></svg>
<svg style="left:229px;top:189px" width="20" height="17"><path d="M1.5 9 L7 15 L18.5 2" fill="none" stroke="#a8a8a8" stroke-width="3"/></svg>
<div class="t" style="left:276.00px;top:184.09px;font-size:22px;color:#555;font-weight:bold;font-family:'Liberation Serif';font-style:italic;">f</div>
<div class="t" style="left:283.50px;top:189.52px;font-size:16px;color:#555;font-weight:bold;font-family:'Liberation Serif';font-style:italic;">x</div>
<div style="position:absolute;left:310px;top:182px;width:1605px;height:78px;background:#fff;border:1px solid #bdbdbd"></div>
<svg style="left:1897px;top:192px" width="12" height="8"><path d="M1 7 L6 2 L11 7" fill="none" stroke="#555" stroke-width="2.2"/></svg>
<div style="position:absolute;left:0px;top:260px;width:1920px;height:33px;background:#f0f0f0"></div>
<svg style="left:16px;top:274px" width="16" height="17"><path d="M15.5 0.5 V16.5 H0 Z" fill="#c8c8c8"/></svg>
<div style="position:absolute;left:34px;top:269px;width:1px;height:24px;background:#b8b8b8"></div>
<div style="position:absolute;left:114px;top:269px;width:1px;height:24px;background:#b8b8b8"></div>
<div class="t" style="left:68.31px;top:272.62px;font-size:17px;color:#333;">A</div>
<div style="position:absolute;left:194px;top:269px;width:1px;height:24px;background:#b8b8b8"></div>
<div class="t" style="left:148.35px;top:272.62px;font-size:17px;color:#333;">B</div>
<div style="position:absolute;left:274px;top:269px;width:1px;height:24px;background:#b8b8b8"></div>
<div class="t" style="left:227.88px;top:272.62px;font-size:17px;color:#333;">C</div>
<div style="position:absolute;left:354px;top:269px;width:1px;height:24px;background:#b8b8b8"></div>
<div class="t" style="left:307.88px;top:272.62px;font-size:17px;color:#333;">D</div>
<div style="position:absolute;left:434px;top:269px;width:1px;height:24px;background:#b8b8b8"></div>
<div class="t" style="left:388.35px;top:272.62px;font-size:17px;color:#333;">E</div>
<div style="position:absolute;left:514px;top:269px;width:1px;height:24px;background:#b8b8b8"></div>
<div class="t" style="left:468.81px;top:272.62px;font-size:17px;color:#333;">F</div>
<div style="position:absolute;left:594px;top:269px;width:1px;height:24px;background:#b8b8b8"></div>
<div class="t" style="left:547.37px;top:272.62px;font-size:17px;color:#333;">G</div>
<div style="position:absolute;left:674px;top:269px;width:1px;height:24px;background:#b8b8b8"></div>
<div class="t" style="left:627.88px;top:272.62px;font-size:17px;color:#333;">H</div>
<div style="position:absolute;left:754px;top:269px;width:1px;height:24px;background:#b8b8b8"></div>
<div class="t" style="left:711.62px;top:272.62px;font-size:17px;color:#333;">I</div>
<div style="position:absolute;left:834px;top:269px;width:1px;height:24px;background:#b8b8b8"></div>
<div class="t" style="left:789.75px;top:272.62px;font-size:17px;color:#333;">J</div>
<div style="position:absolute;left:914px;top:269px;width:1px;height:24px;background:#b8b8b8"></div>
<div class="t" style="left:868.35px;top:272.62px;font-size:17px;color:#333;">K</div>
<div style="position:absolute;left:994px;top:269px;width:1px;height:24px;background:#b8b8b8"></div>
<div class="t" style="left:949.28px;top:272.62px;font-size:17px;color:#333;">L</div>
<div style="position:absolute;left:1074px;top:269px;width:1px;height:24px;background:#b8b8b8"></div>
<div class="t" style="left:1026.90px;top:272.62px;font-size:17px;color:#333;">M</div>
<div style="position:absolute;left:1154px;top:269px;width:1px;height:24px;background:#b8b8b8"></div>
<div class="t" style="left:1107.88px;top:272.62px;font-size:17px;color:#333;">N</div>
<div style="position:absolute;left:1234px;top:269px;width:1px;height:24px;background:#b8b8b8"></div>
<div class="t" style="left:1187.37px;top:272.62px;font-size:17px;color:#333;">O</div>
<div style="position:absolute;left:1314px;top:269px;width:1px;height:24px;background:#b8b8b8"></div>
<div class="t" style="left:1268.35px;top:272.62px;font-size:17px;color:#333;">P</div>
<div style="position:absolute;left:1394px;top:269px;width:1px;height:24px;background:#b8b8b8"></div>
<div class="t" style="left:1347.37px;top:272.62px;font-size:17px;color:#333;">Q</div>
<div style="position:absolute;left:1474px;top:269px;width:1px;height:24px;background:#b8b8b8"></div>
<div class="t" style="left:1427.88px;top:272.62px;font-size:17px;color:#333;">R</div>
<div style="position:absolute;left:1554px;top:269px;width:1px;height:24px;background:#b8b8b8"></div>
<div class="t" style="left:1508.35px;top:272.62px;font-size:17px;color:#333;">S</div>
<div style="position:absolute;left:1634px;top:269px;width:1px;height:24px;background:#b8b8b8"></div>
<div class="t" style="left:1588.82px;top:272.62px;font-size:17px;color:#333;">T</div>
<div style="position:absolute;left:1714px;top:269px;width:1px;height:24px;background:#b8b8b8"></div>
<div class="t" style="left:1667.88px;top:272.62px;font-size:17px;color:#333;">U</div>
<div style="position:absolute;left:1794px;top:269px;width:1px;height:24px;background:#b8b8b8"></div>
<div class="t" style="left:1748.35px;top:272.62px;font-size:17px;color:#333;">V</div>
<div style="position:absolute;left:1874px;top:269px;width:1px;height:24px;background:#b8b8b8"></div>
<div class="t" style="left:1825.97px;top:272.62px;font-size:17px;color:#333;">W</div>
<div style="position:absolute;left:0px;top:293px;width:1895px;height:1px;background:#ababab"></div>
<div style="position:absolute;left:0px;top:294px;width:34px;height:682px;background:#f0f0f0"></div>
<div style="position:absolute;left:34px;top:294px;width:1px;height:682px;background:#ababab"></div>
<div style="position:absolute;left:0px;top:317px;width:34px;height:1px;background:#c0c0c0"></div>
<div class="t" style="left:8.55px;top:296.62px;font-size:17px;color:#333;transform:scaleX(0.8744);">39</div>
<div style="position:absolute;left:0px;top:341px;width:34px;height:1px;background:#c0c0c0"></div>
<div class="t" style="left:8.55px;top:320.62px;font-size:17px;color:#333;transform:scaleX(0.8744);">40</div>
<div style="position:absolute;left:0px;top:365px;width:34px;height:1px;background:#c0c0c0"></div>
<div class="t" style="left:8.55px;top:344.62px;font-size:17px;color:#333;transform:scaleX(0.8744);">41</div>
<div style="position:absolute;left:0px;top:389px;width:34px;height:1px;background:#c0c0c0"></div>
<div class="t" style="left:8.55px;top:368.62px;font-size:17px;color:#333;transform:scaleX(0.8744);">42</div>
<div style="position:absolute;left:0px;top:413px;width:34px;height:1px;background:#c0c0c0"></div>
<div class="t" style="left:8.55px;top:392.62px;font-size:17px;color:#333;transform:scaleX(0.8744);">43</div>
<div style="position:absolute;left:0px;top:437px;width:34px;height:1px;background:#c0c0c0"></div>
<div class="t" style="left:8.55px;top:416.62px;font-size:17px;color:#333;transform:scaleX(0.8744);">44</div>
<div style="position:absolute;left:0px;top:461px;width:34px;height:1px;background:#c0c0c0"></div>
<div class="t" style="left:8.55px;top:440.62px;font-size:17px;color:#333;transform:scaleX(0.8744);">45</div>
<div style="position:absolute;left:0px;top:485px;width:34px;height:1px;background:#c0c0c0"></div>
<div class="t" style="left:8.55px;top:464.62px;font-size:17px;color:#333;transform:scaleX(0.8744);">46</div>
<div style="position:absolute;left:0px;top:509px;width:34px;height:1px;background:#c0c0c0"></div>
<div class="t" style="left:8.55px;top:488.62px;font-size:17px;color:#333;transform:scaleX(0.8744);">47</div>
<div style="position:absolute;left:0px;top:533px;width:34px;height:1px;background:#c0c0c0"></div>
<div class="t" style="left:8.55px;top:512.62px;font-size:17px;color:#333;transform:scaleX(0.8744);">48</div>
<div style="position:absolute;left:0px;top:557px;width:34px;height:1px;background:#c0c0c0"></div>
<div class="t" style="left:8.55px;top:536.62px;font-size:17px;color:#333;transform:scaleX(0.8744);">49</div>
<div style="position:absolute;left:0px;top:581px;width:34px;height:1px;background:#c0c0c0"></div>
<div class="t" style="left:8.55px;top:560.62px;font-size:17px;color:#333;transform:scaleX(0.8744);">50</div>
<div style="position:absolute;left:0px;top:605px;width:34px;height:1px;background:#c0c0c0"></div>
<div class="t" style="left:8.55px;top:584.62px;font-size:17px;color:#333;transform:scaleX(0.8744);">51</div>
<div style="position:absolute;left:0px;top:629px;width:34px;height:1px;background:#c0c0c0"></div>
<div class="t" style="left:8.55px;top:608.62px;font-size:17px;color:#333;transform:scaleX(0.8744);">52</div>
<div style="position:absolute;left:0px;top:653px;width:34px;height:1px;background:#c0c0c0"></div>
<div class="t" style="left:8.55px;top:632.62px;font-size:17px;color:#333;transform:scaleX(0.8744);">53</div>
<div style="position:absolute;left:0px;top:677px;width:34px;height:1px;background:#c0c0c0"></div>
<div class="t" style="left:8.55px;top:656.62px;font-size:17px;color:#333;transform:scaleX(0.8744);">54</div>
<div style="position:absolute;left:0px;top:701px;width:34px;height:1px;background:#c0c0c0"></div>
<div class="t" style="left:8.55px;top:680.62px;font-size:17px;color:#333;transform:scaleX(0.8744);">55</div>
<div style="position:absolute;left:0px;top:725px;width:34px;height:1px;background:#c0c0c0"></div>
<div class="t" style="left:8.55px;top:704.62px;font-size:17px;color:#333;transform:scaleX(0.8744);">56</div>
<div style="position:absolute;left:0px;top:749px;width:34px;height:1px;background:#c0c0c0"></div>
<div class="t" style="left:8.55px;top:728.62px;font-size:17px;color:#333;transform:scaleX(0.8744);">57</div>
<div style="position:absolute;left:0px;top:773px;width:34px;height:1px;background:#c0c0c0"></div>
<div class="t" style="left:8.55px;top:752.62px;font-size:17px;color:#333;transform:scaleX(0.8744);">58</div>
<div style="position:absolute;left:0px;top:797px;width:34px;height:1px;background:#c0c0c0"></div>
<div class="t" style="left:8.55px;top:776.62px;font-size:17px;color:#333;transform:scaleX(0.8744);">59</div>
<div style="position:absolute;left:0px;top:821px;width:34px;height:1px;background:#c0c0c0"></div>
<div class="t" style="left:8.55px;top:800.62px;font-size:17px;color:#333;transform:scaleX(0.8744);">60</div>
<div style="position:absolute;left:0px;top:845px;width:34px;height:1px;background:#c0c0c0"></div>
<div class="t" style="left:8.55px;top:824.62px;font-size:17px;color:#333;transform:scaleX(0.8744);">61</div>
<div style="position:absolute;left:0px;top:869px;width:34px;height:1px;background:#c0c0c0"></div>
<div class="t" style="left:8.55px;top:848.62px;font-size:17px;color:#333;transform:scaleX(0.8744);">62</div>
<div style="position:absolute;left:0px;top:893px;width:34px;height:1px;background:#c0c0c0"></div>
<div class="t" style="left:8.55px;top:872.62px;font-size:17px;color:#333;transform:scaleX(0.8744);">63</div>
<div style="position:absolute;left:0px;top:917px;width:34px;height:1px;background:#c0c0c0"></div>
<div class="t" style="left:8.55px;top:896.62px;font-size:17px;color:#333;transform:scaleX(0.8744);">64</div>
<div style="position:absolute;left:0px;top:941px;width:34px;height:1px;background:#c0c0c0"></div>
<div class="t" style="left:8.55px;top:920.62px;font-size:17px;color:#333;transform:scaleX(0.8744);">65</div>
<div style="position:absolute;left:0px;top:965px;width:34px;height:1px;background:#c0c0c0"></div>
<div class="t" style="left:8.55px;top:944.62px;font-size:17px;color:#333;transform:scaleX(0.8744);">66</div>
<div class="t" style="left:8.55px;top:968.62px;font-size:17px;color:#333;transform:scaleX(0.8744);">67</div>
<div style="position:absolute;left:0px;top:976px;width:34px;height:120px;background:#f0f0f0"></div>
<div style="position:absolute;left:35px;top:294px;width:1859px;height:682px;background:#fff"></div>
<div style="position:absolute;left:1894px;top:293px;width:1px;height:684px;background:#ababab"></div>
<div style="position:absolute;left:0px;top:976px;width:1895px;height:1px;background:#ababab"></div>
<svg style="left:0;top:0" width="1920" height="1080" viewBox="0 0 1920 1080">
<defs><clipPath id="sc"><rect x="35" y="294" width="1859" height="682"/></clipPath></defs>
<g clip-path="url(#sc)">
<g shape-rendering="crispEdges">
<rect x="156" y="871" width="1738" height="1" fill="#efefef"/>
<rect x="156" y="848" width="1738" height="1" fill="#efefef"/>
<rect x="156" y="824" width="1738" height="1" fill="#efefef"/>
<rect x="156" y="801" width="1738" height="1" fill="#efefef"/>
<rect x="156" y="754" width="1738" height="1" fill="#efefef"/>
<rect x="156" y="730" width="1738" height="1" fill="#efefef"/>
<rect x="156" y="707" width="1738" height="1" fill="#efefef"/>
<rect x="156" y="683" width="1738" height="1" fill="#efefef"/>
<rect x="156" y="636" width="1738" height="1" fill="#efefef"/>
<rect x="156" y="613" width="1738" height="1" fill="#efefef"/>
<rect x="156" y="589" width="1738" height="1" fill="#efefef"/>
<rect x="156" y="566" width="1738" height="1" fill="#efefef"/>
<rect x="156" y="519" width="1738" height="1" fill="#efefef"/>
<rect x="156" y="495" width="1738" height="1" fill="#efefef"/>
<rect x="156" y="472" width="1738" height="1" fill="#efefef"/>
<rect x="156" y="448" width="1738" height="1" fill="#efefef"/>
<rect x="156" y="401" width="1738" height="1" fill="#efefef"/>
<rect x="156" y="377" width="1738" height="1" fill="#efefef"/>
<rect x="156" y="354" width="1738" height="1" fill="#efefef"/>
<rect x="156" y="330" width="1738" height="1" fill="#efefef"/>
<rect x="181" y="294" width="1" height="601" fill="#efefef"/>
<rect x="230" y="294" width="1" height="601" fill="#efefef"/>
<rect x="280" y="294" width="1" height="601" fill="#efefef"/>
<rect x="330" y="294" width="1" height="601" fill="#efefef"/>
<rect x="379" y="294" width="1" height="601" fill="#efefef"/>
<rect x="429" y="294" width="1" height="601" fill="#efefef"/>
<rect x="479" y="294" width="1" height="601" fill="#efefef"/>
<rect x="528" y="294" width="1" height="601" fill="#efefef"/>
<rect x="578" y="294" width="1" height="601" fill="#efefef"/>
<rect x="628" y="294" width="1" height="601" fill="#efefef"/>
<rect x="677" y="294" width="1" height="601" fill="#efefef"/>
<rect x="727" y="294" width="1" height="601" fill="#efefef"/>
<rect x="777" y="294" width="1" height="601" fill="#efefef"/>
<rect x="826" y="294" width="1" height="601" fill="#efefef"/>
<rect x="876" y="294" width="1" height="601" fill="#efefef"/>
<rect x="925" y="294" width="1" height="601" fill="#efefef"/>
<rect x="975" y="294" width="1" height="601" fill="#efefef"/>
<rect x="1025" y="294" width="1" height="601" fill="#efefef"/>
<rect x="1074" y="294" width="1" height="601" fill="#efefef"/>
<rect x="1124" y="294" width="1" height="601" fill="#efefef"/>
<rect x="1174" y="294" width="1" height="601" fill="#efefef"/>
<rect x="1223" y="294" width="1" height="601" fill="#efefef"/>
<rect x="1273" y="294" width="1" height="601" fill="#efefef"/>
<rect x="1323" y="294" width="1" height="601" fill="#efefef"/>
<rect x="1372" y="294" width="1" height="601" fill="#efefef"/>
<rect x="1422" y="294" width="1" height="601" fill="#efefef"/>
<rect x="1472" y="294" width="1" height="601" fill="#efefef"/>
<rect x="1521" y="294" width="1" height="601" fill="#efefef"/>
<rect x="1571" y="294" width="1" height="601" fill="#efefef"/>
<rect x="1621" y="294" width="1" height="601" fill="#efefef"/>
<rect x="1670" y="294" width="1" height="601" fill="#efefef"/>
<rect x="1720" y="294" width="1" height="601" fill="#efefef"/>
<rect x="1770" y="294" width="1" height="601" fill="#efefef"/>
<rect x="1819" y="294" width="1" height="601" fill="#efefef"/>
<rect x="1869" y="294" width="1" height="601" fill="#efefef"/>
<rect x="156" y="895" width="1738" height="1" fill="#d9d9d9"/>
<rect x="156" y="777" width="1738" height="1" fill="#d9d9d9"/>
<rect x="156" y="660" width="1738" height="1" fill="#d9d9d9"/>
<rect x="156" y="542" width="1738" height="1" fill="#d9d9d9"/>
<rect x="156" y="424" width="1738" height="1" fill="#d9d9d9"/>
<rect x="156" y="307" width="1738" height="1" fill="#d9d9d9"/>
<rect x="156" y="294" width="1" height="672" fill="#d9d9d9"/>
<rect x="206" y="294" width="1" height="672" fill="#d9d9d9"/>
<rect x="255" y="294" width="1" height="672" fill="#d9d9d9"/>
<rect x="305" y="294" width="1" height="672" fill="#d9d9d9"/>
<rect x="355" y="294" width="1" height="672" fill="#d9d9d9"/>
<rect x="404" y="294" width="1" height="672" fill="#d9d9d9"/>
<rect x="454" y="294" width="1" height="672" fill="#d9d9d9"/>
<rect x="503" y="294" width="1" height="672" fill="#d9d9d9"/>
<rect x="553" y="294" width="1" height="672" fill="#d9d9d9"/>
<rect x="603" y="294" width="1" height="672" fill="#d9d9d9"/>
<rect x="652" y="294" width="1" height="672" fill="#d9d9d9"/>
<rect x="702" y="294" width="1" height="672" fill="#d9d9d9"/>
<rect x="752" y="294" width="1" height="672" fill="#d9d9d9"/>
<rect x="801" y="294" width="1" height="672" fill="#d9d9d9"/>
<rect x="851" y="294" width="1" height="672" fill="#d9d9d9"/>
<rect x="901" y="294" width="1" height="672" fill="#d9d9d9"/>
<rect x="950" y="294" width="1" height="672" fill="#d9d9d9"/>
<rect x="1000" y="294" width="1" height="672" fill="#d9d9d9"/>
<rect x="1050" y="294" width="1" height="672" fill="#d9d9d9"/>
<rect x="1099" y="294" width="1" height="672" fill="#d9d9d9"/>
<rect x="1149" y="294" width="1" height="672" fill="#d9d9d9"/>
<rect x="1199" y="294" width="1" height="672" fill="#d9d9d9"/>
<rect x="1248" y="294" width="1" height="672" fill="#d9d9d9"/>
<rect x="1298" y="294" width="1" height="672" fill="#d9d9d9"/>
<rect x="1348" y="294" width="1" height="672" fill="#d9d9d9"/>
<rect x="1397" y="294" width="1" height="672" fill="#d9d9d9"/>
<rect x="1447" y="294" width="1" height="672" fill="#d9d9d9"/>
<rect x="1496" y="294" width="1" height="672" fill="#d9d9d9"/>
<rect x="1546" y="294" width="1" height="672" fill="#d9d9d9"/>
<rect x="1596" y="294" width="1" height="672" fill="#d9d9d9"/>
<rect x="1645" y="294" width="1" height="672" fill="#d9d9d9"/>
<rect x="1695" y="294" width="1" height="672" fill="#d9d9d9"/>
<rect x="1745" y="294" width="1" height="672" fill="#d9d9d9"/>
<rect x="1794" y="294" width="1" height="672" fill="#d9d9d9"/>
<rect x="1844" y="294" width="1" height="672" fill="#d9d9d9"/>
<rect x="1894" y="294" width="1" height="672" fill="#d9d9d9"/>
<rect x="83" y="918" width="1811" height="1" fill="#d9d9d9"/>
<rect x="83" y="942" width="1811" height="1" fill="#d9d9d9"/>
<rect x="83" y="966" width="1811" height="1" fill="#d9d9d9"/>
<rect x="83" y="918" width="1" height="49" fill="#d9d9d9"/>
</g>
<polyline points="181.23,627.21 230.88,857.66 280.53,695.99 330.18,824.15 379.83,847.08 429.48,808.28 479.13,750.66 528.79,743.02 578.44,855.31 628.09,809.45 677.74,877.65 727.39,771.83 777.04,857.07 826.69,773.00 876.35,820.04 926.00,807.69 975.65,856.49 1025.30,881.77 1074.95,874.71 1124.60,734.79 1174.25,885.29 1223.91,828.86 1273.56,824.15 1323.21,750.08 1372.86,734.79 1422.51,850.61 1472.16,701.28 1521.81,797.11 1571.47,826.50 1621.12,748.90 1670.77,742.43 1720.42,829.15 1770.07,627.79 1819.72,698.34 1869.37,722.45" fill="none" stroke="#5b9bd5" stroke-width="4" stroke-linejoin="round" stroke-linecap="round"/>
<circle cx="181.23" cy="627.21" r="4.2" fill="#5b9bd5"/>
<circle cx="230.88" cy="857.66" r="4.2" fill="#5b9bd5"/>
<circle cx="280.53" cy="695.99" r="4.2" fill="#5b9bd5"/>
<circle cx="330.18" cy="824.15" r="4.2" fill="#5b9bd5"/>
<circle cx="379.83" cy="847.08" r="4.2" fill="#5b9bd5"/>
<circle cx="429.48" cy="808.28" r="4.2" fill="#5b9bd5"/>
<circle cx="479.13" cy="750.66" r="4.2" fill="#5b9bd5"/>
<circle cx="528.79" cy="743.02" r="4.2" fill="#5b9bd5"/>
<circle cx="578.44" cy="855.31" r="4.2" fill="#5b9bd5"/>
<circle cx="628.09" cy="809.45" r="4.2" fill="#5b9bd5"/>
<circle cx="677.74" cy="877.65" r="4.2" fill="#5b9bd5"/>
<circle cx="727.39" cy="771.83" r="4.2" fill="#5b9bd5"/>
<circle cx="777.04" cy="857.07" r="4.2" fill="#5b9bd5"/>
<circle cx="826.69" cy="773.00" r="4.2" fill="#5b9bd5"/>
<circle cx="876.35" cy="820.04" r="4.2" fill="#5b9bd5"/>
<circle cx="926.00" cy="807.69" r="4.2" fill="#5b9bd5"/>
<circle cx="975.65" cy="856.49" r="4.2" fill="#5b9bd5"/>
<circle cx="1025.30" cy="881.77" r="4.2" fill="#5b9bd5"/>
<circle cx="1074.95" cy="874.71" r="4.2" fill="#5b9bd5"/>
<circle cx="1124.60" cy="734.79" r="4.2" fill="#5b9bd5"/>
<circle cx="1174.25" cy="885.29" r="4.2" fill="#5b9bd5"/>
<circle cx="1223.91" cy="828.86" r="4.2" fill="#5b9bd5"/>
<circle cx="1273.56" cy="824.15" r="4.2" fill="#5b9bd5"/>
<circle cx="1323.21" cy="750.08" r="4.2" fill="#5b9bd5"/>
<circle cx="1372.86" cy="734.79" r="4.2" fill="#5b9bd5"/>
<circle cx="1422.51" cy="850.61" r="4.2" fill="#5b9bd5"/>
<circle cx="1472.16" cy="701.28" r="4.2" fill="#5b9bd5"/>
<circle cx="1521.81" cy="797.11" r="4.2" fill="#5b9bd5"/>
<circle cx="1571.47" cy="826.50" r="4.2" fill="#5b9bd5"/>
<circle cx="1621.12" cy="748.90" r="4.2" fill="#5b9bd5"/>
<circle cx="1670.77" cy="742.43" r="4.2" fill="#5b9bd5"/>
<circle cx="1720.42" cy="829.15" r="4.2" fill="#5b9bd5"/>
<circle cx="1770.07" cy="627.79" r="4.2" fill="#5b9bd5"/>
<circle cx="1819.72" cy="698.34" r="4.2" fill="#5b9bd5"/>
<circle cx="1869.37" cy="722.45" r="4.2" fill="#5b9bd5"/>
<polyline points="181.23,719.51 230.88,879.41 280.53,593.70 330.18,894.70 379.83,885.88 429.48,692.46 479.13,853.55 528.79,724.21 578.44,838.85 628.09,864.72 677.74,875.30 727.39,894.70 777.04,874.71 826.69,858.25 876.35,841.20 926.00,845.90 975.65,610.16 1025.30,877.65 1074.95,871.77 1124.60,889.41 1174.25,890.00 1223.91,882.35 1273.56,780.06 1323.21,821.21 1372.86,385.58 1422.51,348.54 1472.16,890.58 1521.81,718.92 1571.47,884.12 1621.12,894.70 1670.77,878.83 1720.42,880.00 1770.07,761.25 1819.72,271.53 1869.37,734.20" fill="none" stroke="#ed7d31" stroke-width="4" stroke-linejoin="round" stroke-linecap="round"/>
<circle cx="181.23" cy="719.51" r="4.2" fill="#ed7d31"/>
<circle cx="230.88" cy="879.41" r="4.2" fill="#ed7d31"/>
<circle cx="280.53" cy="593.70" r="4.2" fill="#ed7d31"/>
<circle cx="330.18" cy="894.70" r="4.2" fill="#ed7d31"/>
<circle cx="379.83" cy="885.88" r="4.2" fill="#ed7d31"/>
<circle cx="429.48" cy="692.46" r="4.2" fill="#ed7d31"/>
<circle cx="479.13" cy="853.55" r="4.2" fill="#ed7d31"/>
<circle cx="528.79" cy="724.21" r="4.2" fill="#ed7d31"/>
<circle cx="578.44" cy="838.85" r="4.2" fill="#ed7d31"/>
<circle cx="628.09" cy="864.72" r="4.2" fill="#ed7d31"/>
<circle cx="677.74" cy="875.30" r="4.2" fill="#ed7d31"/>
<circle cx="727.39" cy="894.70" r="4.2" fill="#ed7d31"/>
<circle cx="777.04" cy="874.71" r="4.2" fill="#ed7d31"/>
<circle cx="826.69" cy="858.25" r="4.2" fill="#ed7d31"/>
<circle cx="876.35" cy="841.20" r="4.2" fill="#ed7d31"/>
<circle cx="926.00" cy="845.90" r="4.2" fill="#ed7d31"/>
<circle cx="975.65" cy="610.16" r="4.2" fill="#ed7d31"/>
<circle cx="1025.30" cy="877.65" r="4.2" fill="#ed7d31"/>
<circle cx="1074.95" cy="871.77" r="4.2" fill="#ed7d31"/>
<circle cx="1124.60" cy="889.41" r="4.2" fill="#ed7d31"/>
<circle cx="1174.25" cy="890.00" r="4.2" fill="#ed7d31"/>
<circle cx="1223.91" cy="882.35" r="4.2" fill="#ed7d31"/>
<circle cx="1273.56" cy="780.06" r="4.2" fill="#ed7d31"/>
<circle cx="1323.21" cy="821.21" r="4.2" fill="#ed7d31"/>
<circle cx="1372.86" cy="385.58" r="4.2" fill="#ed7d31"/>
<circle cx="1422.51" cy="348.54" r="4.2" fill="#ed7d31"/>
<circle cx="1472.16" cy="890.58" r="4.2" fill="#ed7d31"/>
<circle cx="1521.81" cy="718.92" r="4.2" fill="#ed7d31"/>
<circle cx="1571.47" cy="884.12" r="4.2" fill="#ed7d31"/>
<circle cx="1621.12" cy="894.70" r="4.2" fill="#ed7d31"/>
<circle cx="1670.77" cy="878.83" r="4.2" fill="#ed7d31"/>
<circle cx="1720.42" cy="880.00" r="4.2" fill="#ed7d31"/>
<circle cx="1770.07" cy="761.25" r="4.2" fill="#ed7d31"/>
<circle cx="1819.72" cy="271.53" r="4.2" fill="#ed7d31"/>
<circle cx="1869.37" cy="734.20" r="4.2" fill="#ed7d31"/>
<line x1="89" y1="930.5" x2="121" y2="930.5" stroke="#5b9bd5" stroke-width="4" stroke-linecap="round"/><circle cx="104.5" cy="930.5" r="4.2" fill="#5b9bd5"/>
<line x1="89" y1="954.5" x2="121" y2="954.5" stroke="#ed7d31" stroke-width="4" stroke-linecap="round"/><circle cx="104.5" cy="954.5" r="4.2" fill="#ed7d31"/>
</g></svg>
<div style="position:absolute;left:35px;top:294px;width:1859px;height:682px;overflow:hidden">
<div class="t" style="left:99.95px;top:593.33px;font-size:13px;color:#595959;transform:scaleX(1.0600);">0</div>
<div class="t" style="left:76.94px;top:475.75px;font-size:13px;color:#595959;transform:scaleX(1.0600);">2000</div>
<div class="t" style="left:76.94px;top:358.17px;font-size:13px;color:#595959;transform:scaleX(1.0600);">4000</div>
<div class="t" style="left:76.94px;top:240.59px;font-size:13px;color:#595959;transform:scaleX(1.0600);">6000</div>
<div class="t" style="left:76.94px;top:123.02px;font-size:13px;color:#595959;transform:scaleX(1.0600);">8000</div>
<div class="t" style="left:69.29px;top:5.43px;font-size:13px;color:#595959;transform:scaleX(1.0600);">10000</div>
<div class="t" style="left:134.66px;top:605.24px;font-size:13px;color:#595959;">В35</div>
<div class="t" style="left:130.90px;top:628.34px;font-size:13px;color:#595959;transform:scaleX(1.0600);">4550</div>
<div class="t" style="left:130.90px;top:652.03px;font-size:13px;color:#595959;transform:scaleX(1.0600);">2980</div>
<div class="t" style="left:184.31px;top:605.24px;font-size:13px;color:#595959;">В34</div>
<div class="t" style="left:184.37px;top:628.34px;font-size:13px;color:#595959;transform:scaleX(1.0600);">630</div>
<div class="t" style="left:184.37px;top:652.03px;font-size:13px;color:#595959;transform:scaleX(1.0600);">260</div>
<div class="t" style="left:233.96px;top:605.24px;font-size:13px;color:#595959;">В33</div>
<div class="t" style="left:230.20px;top:628.34px;font-size:13px;color:#595959;transform:scaleX(1.0600);">3380</div>
<div class="t" style="left:230.20px;top:652.03px;font-size:13px;color:#595959;transform:scaleX(1.0600);">5120</div>
<div class="t" style="left:283.61px;top:605.24px;font-size:13px;color:#595959;">В32</div>
<div class="t" style="left:279.85px;top:628.34px;font-size:13px;color:#595959;transform:scaleX(1.0600);">1200</div>
<div class="t" style="left:291.36px;top:652.03px;font-size:13px;color:#595959;transform:scaleX(1.0600);">0</div>
<div class="t" style="left:333.26px;top:605.24px;font-size:13px;color:#595959;">В31</div>
<div class="t" style="left:333.33px;top:628.34px;font-size:13px;color:#595959;transform:scaleX(1.0600);">810</div>
<div class="t" style="left:333.33px;top:652.03px;font-size:13px;color:#595959;transform:scaleX(1.0600);">150</div>
<div class="t" style="left:382.91px;top:605.24px;font-size:13px;color:#595959;">В30</div>
<div class="t" style="left:379.15px;top:628.34px;font-size:13px;color:#595959;transform:scaleX(1.0600);">1470</div>
<div class="t" style="left:379.15px;top:652.03px;font-size:13px;color:#595959;transform:scaleX(1.0600);">3440</div>
<div class="t" style="left:432.56px;top:605.24px;font-size:13px;color:#595959;">В29</div>
<div class="t" style="left:428.80px;top:628.34px;font-size:13px;color:#595959;transform:scaleX(1.0600);">2450</div>
<div class="t" style="left:432.63px;top:652.03px;font-size:13px;color:#595959;transform:scaleX(1.0600);">700</div>
<div class="t" style="left:482.22px;top:605.24px;font-size:13px;color:#595959;">В28</div>
<div class="t" style="left:478.46px;top:628.34px;font-size:13px;color:#595959;transform:scaleX(1.0600);">2580</div>
<div class="t" style="left:478.46px;top:652.03px;font-size:13px;color:#595959;transform:scaleX(1.0600);">2900</div>
<div class="t" style="left:531.87px;top:605.24px;font-size:13px;color:#595959;">В27</div>
<div class="t" style="left:531.93px;top:628.34px;font-size:13px;color:#595959;transform:scaleX(1.0600);">670</div>
<div class="t" style="left:531.93px;top:652.03px;font-size:13px;color:#595959;transform:scaleX(1.0600);">950</div>
<div class="t" style="left:581.52px;top:605.24px;font-size:13px;color:#595959;">В26</div>
<div class="t" style="left:577.76px;top:628.34px;font-size:13px;color:#595959;transform:scaleX(1.0600);">1450</div>
<div class="t" style="left:581.58px;top:652.03px;font-size:13px;color:#595959;transform:scaleX(1.0600);">510</div>
<div class="t" style="left:631.17px;top:605.24px;font-size:13px;color:#595959;">В25</div>
<div class="t" style="left:631.23px;top:628.34px;font-size:13px;color:#595959;transform:scaleX(1.0600);">290</div>
<div class="t" style="left:631.23px;top:652.03px;font-size:13px;color:#595959;transform:scaleX(1.0600);">330</div>
<div class="t" style="left:680.89px;top:605.24px;font-size:13px;color:#595959;">Б24</div>
<div class="t" style="left:677.06px;top:628.34px;font-size:13px;color:#595959;transform:scaleX(1.0600);">2090</div>
<div class="t" style="left:688.57px;top:652.03px;font-size:13px;color:#595959;transform:scaleX(1.0600);">0</div>
<div class="t" style="left:730.54px;top:605.24px;font-size:13px;color:#595959;">Б23</div>
<div class="t" style="left:730.54px;top:628.34px;font-size:13px;color:#595959;transform:scaleX(1.0600);">640</div>
<div class="t" style="left:730.54px;top:652.03px;font-size:13px;color:#595959;transform:scaleX(1.0600);">340</div>
<div class="t" style="left:780.19px;top:605.24px;font-size:13px;color:#595959;">Б22</div>
<div class="t" style="left:776.36px;top:628.34px;font-size:13px;color:#595959;transform:scaleX(1.0600);">2070</div>
<div class="t" style="left:780.19px;top:652.03px;font-size:13px;color:#595959;transform:scaleX(1.0600);">620</div>
<div class="t" style="left:829.84px;top:605.24px;font-size:13px;color:#595959;">Б21</div>
<div class="t" style="left:826.02px;top:628.34px;font-size:13px;color:#595959;transform:scaleX(1.0600);">1270</div>
<div class="t" style="left:829.84px;top:652.03px;font-size:13px;color:#595959;transform:scaleX(1.0600);">910</div>
<div class="t" style="left:879.49px;top:605.24px;font-size:13px;color:#595959;">Б20</div>
<div class="t" style="left:875.67px;top:628.34px;font-size:13px;color:#595959;transform:scaleX(1.0600);">1480</div>
<div class="t" style="left:879.49px;top:652.03px;font-size:13px;color:#595959;transform:scaleX(1.0600);">830</div>
<div class="t" style="left:929.14px;top:605.24px;font-size:13px;color:#595959;">Б19</div>
<div class="t" style="left:929.14px;top:628.34px;font-size:13px;color:#595959;transform:scaleX(1.0600);">650</div>
<div class="t" style="left:925.32px;top:652.03px;font-size:13px;color:#595959;transform:scaleX(1.0600);">4840</div>
<div class="t" style="left:978.79px;top:605.24px;font-size:13px;color:#595959;">Б18</div>
<div class="t" style="left:978.79px;top:628.34px;font-size:13px;color:#595959;transform:scaleX(1.0600);">220</div>
<div class="t" style="left:978.79px;top:652.03px;font-size:13px;color:#595959;transform:scaleX(1.0600);">290</div>
<div class="t" style="left:1028.45px;top:605.24px;font-size:13px;color:#595959;">Б17</div>
<div class="t" style="left:1028.45px;top:628.34px;font-size:13px;color:#595959;transform:scaleX(1.0600);">340</div>
<div class="t" style="left:1028.45px;top:652.03px;font-size:13px;color:#595959;transform:scaleX(1.0600);">390</div>
<div class="t" style="left:1078.10px;top:605.24px;font-size:13px;color:#595959;">Б16</div>
<div class="t" style="left:1074.27px;top:628.34px;font-size:13px;color:#595959;transform:scaleX(1.0600);">2720</div>
<div class="t" style="left:1081.95px;top:652.03px;font-size:13px;color:#595959;transform:scaleX(1.0600);">90</div>
<div class="t" style="left:1127.75px;top:605.24px;font-size:13px;color:#595959;">Б15</div>
<div class="t" style="left:1127.75px;top:628.34px;font-size:13px;color:#595959;transform:scaleX(1.0600);">160</div>
<div class="t" style="left:1131.61px;top:652.03px;font-size:13px;color:#595959;transform:scaleX(1.0600);">80</div>
<div class="t" style="left:1177.40px;top:605.24px;font-size:13px;color:#595959;">Б14</div>
<div class="t" style="left:1174.09px;top:628.34px;font-size:13px;color:#595959;transform:scaleX(1.0600);">1120</div>
<div class="t" style="left:1177.40px;top:652.03px;font-size:13px;color:#595959;transform:scaleX(1.0600);">210</div>
<div class="t" style="left:1227.05px;top:605.24px;font-size:13px;color:#595959;">Б13</div>
<div class="t" style="left:1223.23px;top:628.34px;font-size:13px;color:#595959;transform:scaleX(1.0600);">1200</div>
<div class="t" style="left:1223.23px;top:652.03px;font-size:13px;color:#595959;transform:scaleX(1.0600);">1950</div>
<div class="t" style="left:1276.64px;top:605.24px;font-size:13px;color:#595959;">А12</div>
<div class="t" style="left:1272.88px;top:628.34px;font-size:13px;color:#595959;transform:scaleX(1.0600);">2460</div>
<div class="t" style="left:1272.88px;top:652.03px;font-size:13px;color:#595959;transform:scaleX(1.0600);">1250</div>
<div class="t" style="left:1326.78px;top:605.24px;font-size:13px;color:#595959;">А11</div>
<div class="t" style="left:1322.53px;top:628.34px;font-size:13px;color:#595959;transform:scaleX(1.0600);">2720</div>
<div class="t" style="left:1322.53px;top:652.03px;font-size:13px;color:#595959;transform:scaleX(1.0600);">8660</div>
<div class="t" style="left:1375.94px;top:605.24px;font-size:13px;color:#595959;">А10</div>
<div class="t" style="left:1376.01px;top:628.34px;font-size:13px;color:#595959;transform:scaleX(1.0600);">750</div>
<div class="t" style="left:1372.18px;top:652.03px;font-size:13px;color:#595959;transform:scaleX(1.0600);">9290</div>
<div class="t" style="left:1429.20px;top:605.24px;font-size:13px;color:#595959;">А9</div>
<div class="t" style="left:1421.83px;top:628.34px;font-size:13px;color:#595959;transform:scaleX(1.0600);">3290</div>
<div class="t" style="left:1429.51px;top:652.03px;font-size:13px;color:#595959;transform:scaleX(1.0600);">70</div>
<div class="t" style="left:1478.85px;top:605.24px;font-size:13px;color:#595959;">А8</div>
<div class="t" style="left:1471.48px;top:628.34px;font-size:13px;color:#595959;transform:scaleX(1.0600);">1660</div>
<div class="t" style="left:1471.48px;top:652.03px;font-size:13px;color:#595959;transform:scaleX(1.0600);">2990</div>
<div class="t" style="left:1528.50px;top:605.24px;font-size:13px;color:#595959;">А7</div>
<div class="t" style="left:1521.65px;top:628.34px;font-size:13px;color:#595959;transform:scaleX(1.0600);">1160</div>
<div class="t" style="left:1524.96px;top:652.03px;font-size:13px;color:#595959;transform:scaleX(1.0600);">180</div>
<div class="t" style="left:1578.15px;top:605.24px;font-size:13px;color:#595959;">А6</div>
<div class="t" style="left:1570.79px;top:628.34px;font-size:13px;color:#595959;transform:scaleX(1.0600);">2480</div>
<div class="t" style="left:1582.29px;top:652.03px;font-size:13px;color:#595959;transform:scaleX(1.0600);">0</div>
<div class="t" style="left:1627.81px;top:605.24px;font-size:13px;color:#595959;">А5</div>
<div class="t" style="left:1620.44px;top:628.34px;font-size:13px;color:#595959;transform:scaleX(1.0600);">2590</div>
<div class="t" style="left:1624.26px;top:652.03px;font-size:13px;color:#595959;transform:scaleX(1.0600);">270</div>
<div class="t" style="left:1677.46px;top:605.24px;font-size:13px;color:#595959;">А4</div>
<div class="t" style="left:1671.12px;top:628.34px;font-size:13px;color:#595959;transform:scaleX(1.0600);">1115</div>
<div class="t" style="left:1673.91px;top:652.03px;font-size:13px;color:#595959;transform:scaleX(1.0600);">250</div>
<div class="t" style="left:1727.11px;top:605.24px;font-size:13px;color:#595959;">А3</div>
<div class="t" style="left:1719.74px;top:628.34px;font-size:13px;color:#595959;transform:scaleX(1.0600);">4540</div>
<div class="t" style="left:1719.74px;top:652.03px;font-size:13px;color:#595959;transform:scaleX(1.0600);">2270</div>
<div class="t" style="left:1776.76px;top:605.24px;font-size:13px;color:#595959;">А2</div>
<div class="t" style="left:1769.39px;top:628.34px;font-size:13px;color:#595959;transform:scaleX(1.0600);">3340</div>
<div class="t" style="left:1765.57px;top:652.03px;font-size:13px;color:#595959;transform:scaleX(1.0600);">10600</div>
<div class="t" style="left:1826.41px;top:605.24px;font-size:13px;color:#595959;">А1</div>
<div class="t" style="left:1819.04px;top:628.34px;font-size:13px;color:#595959;transform:scaleX(1.0600);">2930</div>
<div class="t" style="left:1819.04px;top:652.03px;font-size:13px;color:#595959;transform:scaleX(1.0600);">2730</div>
<div class="t" style="left:89.50px;top:628.34px;font-size:13px;color:#595959;transform:scaleX(1.0219);">1тур</div>
<div class="t" style="left:89.50px;top:652.03px;font-size:13px;color:#595959;transform:scaleX(1.0219);">2тур</div>
<div class="t" style="left:938.75px;top:668.16px;font-size:16.4px;color:#595959;transform:scaleX(0.8982);">сектора</div>
</div>
<div class="t" style="left:80.94px;top:553px;font-size:16.4px;color:#595959;transform-origin:0 0;transform:rotate(-90deg) scaleX(0.86)">вес</div>
<div style="position:absolute;left:34px;top:516px;width:4px;height:10px;background:#fff;border:1px solid #b0b0b0;border-radius:1px"></div>
<div style="position:absolute;left:1891px;top:516px;width:4px;height:10px;background:#fff;border:1px solid #b0b0b0;border-radius:1px"></div>
<div style="position:absolute;left:1894px;top:293px;width:1px;height:684px;background:#ababab"></div>
<div style="position:absolute;left:34px;top:294px;width:1px;height:682px;background:#ababab"></div>
<div style="position:absolute;left:1898px;top:291px;width:19px;height:668px;background:#dadada"></div>
<div style="position:absolute;left:1898px;top:272px;width:19px;height:19px;background:#fff;border:1px solid #ababab"></div>
<svg style="left:1903px;top:278px" width="9" height="6"><path d="M0 5 H9 L4.5 0.5Z" fill="#5f5f5f"/></svg>
<div style="position:absolute;left:1898px;top:654px;width:19px;height:266px;background:#fff;border:1px solid #ababab"></div>
<div style="position:absolute;left:1898px;top:958px;width:19px;height:19px;background:#fff;border:1px solid #ababab"></div>
<svg style="left:1903px;top:965px" width="9" height="6"><path d="M0 0.5 H9 L4.5 5Z" fill="#5f5f5f"/></svg>
<svg style="left:27px;top:985px" width="40" height="10"><path d="M6 0.5 V9.5 L1 5Z M30 0.5 V9.5 L35 5Z" fill="#b0b0b0"/></svg>
<div style="position:absolute;left:103px;top:980px;width:1px;height:20px;background:#c6c6c6"></div>
<div style="position:absolute;left:176px;top:980px;width:1px;height:20px;background:#c6c6c6"></div>
<div class="t" style="left:117.50px;top:978.52px;font-size:16px;color:#444;transform:scaleX(0.9959);">Лист1</div>
<div class="t" style="left:190.50px;top:978.52px;font-size:16px;color:#444;transform:scaleX(1.0073);">Лист2</div>
<div style="position:absolute;left:249px;top:976px;width:73px;height:25px;background:#fff;border-left:1px solid #ababab;border-right:1px solid #ababab"></div>
<div style="position:absolute;left:250px;top:999px;width:71px;height:2px;background:#217346"></div>
<div class="t" style="left:261.00px;top:978.52px;font-size:16px;color:#217346;font-weight:bold;transform:scaleX(1.0274);">Лист3</div>
<svg style="left:354px;top:980px" width="22" height="22"><circle cx="10.5" cy="10.5" r="9.5" fill="none" stroke="#555" stroke-width="1.3"/><path d="M10.5 5.5 V15.5 M5.5 10.5 H15.5" stroke="#555" stroke-width="1.8"/></svg>
<svg style="left:1148px;top:985px" width="4" height="13"><g fill="#666"><rect x="0.5" y="0" width="2" height="2"/><rect x="0.5" y="5" width="2" height="2"/><rect x="0.5" y="10" width="2" height="2"/></g></svg>
<div style="position:absolute;left:1167px;top:981px;width:728px;height:19px;background:#dadada"></div>
<div style="position:absolute;left:1167px;top:981px;width:20px;height:19px;background:#fff;border:1px solid #ababab"></div>
<svg style="left:1172px;top:986px" width="6" height="9"><path d="M5.5 0 V9 L0.5 4.5Z" fill="#5f5f5f"/></svg>
<div style="position:absolute;left:1186px;top:981px;width:610px;height:19px;background:#fff;border:1px solid #ababab"></div>
<div style="position:absolute;left:1876px;top:981px;width:19px;height:19px;background:#fff;border:1px solid #ababab"></div>
<svg style="left:1883px;top:986px" width="6" height="9"><path d="M0.5 0 V9 L5.5 4.5Z" fill="#5f5f5f"/></svg>
<div style="position:absolute;left:0px;top:1005px;width:1920px;height:27px;background:#0e6535"></div>
<div class="t" style="left:7.30px;top:1011.69px;font-size:12.5px;color:#fff;transform:scaleX(0.9692);">ГОТОВО</div>
<div style="position:absolute;left:1582px;top:1005px;width:41px;height:27px;background:#0a532b"></div>
<svg style="left:1595px;top:1011px" width="14" height="14" viewBox="0 0 14 14"><g fill="none" stroke="#fff" stroke-width="1.2">
<rect x="0.6" y="0.6" width="12.8" height="12.8"/><line x1="4.9" y1="0" x2="4.9" y2="14"/><line x1="9.1" y1="0" x2="9.1" y2="14"/><line x1="0" y1="4.9" x2="14" y2="4.9"/><line x1="0" y1="9.1" x2="14" y2="9.1"/></g></svg>
<svg style="left:1636px;top:1011px" width="15" height="14" viewBox="0 0 15 14"><g fill="none" stroke="#fff" stroke-width="1.2">
<rect x="0.6" y="0.6" width="13.8" height="12.8"/><rect x="3.5" y="3" width="8" height="8"/></g><g stroke="#fff" stroke-width="1"><line x1="5" y1="5.5" x2="10" y2="5.5"/><line x1="5" y1="7.5" x2="10" y2="7.5"/><line x1="5" y1="9.5" x2="10" y2="9.5"/></g></svg>
<svg style="left:1677px;top:1011px" width="15" height="14" viewBox="0 0 15 14"><rect x="0.6" y="0.6" width="13.8" height="12.8" fill="none" stroke="#fff" stroke-width="1.2"/>
<rect x="3" y="1" width="2.5" height="7" fill="#fff"/><rect x="7" y="1" width="2.5" height="7" fill="#fff"/></svg>
<div style="position:absolute;left:1710px;top:1017px;width:9px;height:3px;background:#fff"></div>
<div style="position:absolute;left:1723px;top:1018px;width:125px;height:1px;background:#fff"></div>
<div style="position:absolute;left:1783px;top:1012px;width:5px;height:14px;background:#fff"></div>
<svg style="left:1852px;top:1012px" width="13" height="13"><path d="M6.5 0 V13 M0 6.5 H13" stroke="#fff" stroke-width="2.4"/></svg>
<div class="t" style="left:1880.00px;top:1011.78px;font-size:13.5px;color:#fff;transform:scaleX(0.8970);">100%</div>
<div style="position:absolute;left:0;top:1032px;width:1920px;height:48px;background:linear-gradient(90deg,#8ea5bd 0px,#a3bcd6 60px,#b3cde8 130px,#b3cde8 1600px,#8fa4bb 1650px,#8fa4bb 1920px)"></div>
<div style="position:absolute;left:0px;top:1032px;width:1920px;height:1px;background:#c9d8e6"></div>
<svg style="left:11px;top:1034px" width="44" height="44" viewBox="0 0 44 44">
<defs><linearGradient id="orbg" x1="0" y1="0" x2="0" y2="1"><stop offset="0" stop-color="#c9d3de"/><stop offset="0.45" stop-color="#6f8aa6"/><stop offset="0.5" stop-color="#184f86"/><stop offset="0.8" stop-color="#1f6fb0"/><stop offset="1" stop-color="#2fd0f0"/></linearGradient></defs>
<circle cx="22" cy="22" r="21" fill="url(#orbg)" stroke="#123c64" stroke-width="1.3"/>
<path d="M11 10 C14 7.5 18 7.5 22 10 L20.5 21 C17 18.5 13 18.5 9.5 21Z" fill="#f0602a"/>
<path d="M23.5 10.5 C27 13 31 13 35 10.5 L33.5 21.5 C30 24 26 24 22 21.5Z" fill="#7cbb3a"/>
<path d="M9 23 C12.5 20.5 16.5 20.5 20 23 L18.5 33.5 C15 31 11 31 7.5 33.5Z" fill="#2aa2e6"/>
<path d="M21.5 23.5 C25 26 29 26 33 23.5 L31.5 34 C28 36.5 24 36.5 20 34Z" fill="#fbbb22"/>
</svg>
<svg style="left:86px;top:1036px" width="40" height="40" viewBox="0 0 40 40">
<path d="M0.5 4 Q0.5 2 2.5 2 H11 L13 4 H38 V36 H0.5Z" fill="#e9c766"/>
<rect x="3" y="3.5" width="8" height="4" fill="#f7f3e6"/><rect x="3.5" y="4" width="2" height="3" fill="#3a9a3a"/>
<rect x="12" y="5" width="12" height="4" fill="#f7f3e6"/><rect x="12.5" y="5.5" width="2" height="3" fill="#c84a2a"/>
<rect x="25" y="7" width="12" height="4" fill="#f7f3e6"/><rect x="25.5" y="7.5" width="2" height="3" fill="#3a7ab0"/>
<path d="M0.5 11 H38.5 V37 H0.5Z" fill="#f6dc86"/>
<path d="M4.5 23 Q4.5 20.5 7 20.5 H32 Q34.5 20.5 34.5 23 V39 H27 V35 H12 V39 H4.5Z" fill="#5fb3e0"/>
<rect x="12.5" y="33.5" width="14.5" height="3" fill="#f0d070"/>
<path d="M6 22 H33" stroke="#bfe6f8" stroke-width="1.5"/>
</svg>
<div style="position:absolute;left:141px;top:1033px;width:67px;height:47px;background:linear-gradient(#dfe9f5,#c4d6ec);border:1px solid #8ea6c0;border-radius:2px"></div>
<div style="position:absolute;left:281px;top:1033px;width:67px;height:47px;background:linear-gradient(#dfe9f5,#c4d6ec);border:1px solid #8ea6c0;border-radius:2px"></div>
<div style="position:absolute;left:351px;top:1033px;width:67px;height:47px;background:linear-gradient(#dfe9f5,#c4d6ec);border:1px solid #8ea6c0;border-radius:2px"></div>
<svg style="left:155px;top:1036px" width="40" height="40" viewBox="0 0 40 40">
<circle cx="20" cy="20" r="18" fill="#db4437"/>
<path d="M20 20 L36.5 11 A18 18 0 0 1 22 38 Z" fill="#ffcd40"/>
<path d="M20 20 L22 38 A18 18 0 0 1 3.5 11.5 Z" fill="#0f9d58"/>
<path d="M3.5 11.5 A18 18 0 0 1 36.5 11 L20 11 Z" fill="#db4437"/>
<circle cx="20" cy="20" r="8.5" fill="#fff"/><circle cx="20" cy="20" r="6.8" fill="#4285f4"/></svg>
<svg style="left:226px;top:1036px" width="38" height="38" viewBox="0 0 38 38">
<rect x="1" y="1" width="36" height="36" fill="#31c5f0"/><rect x="3.5" y="3.5" width="31" height="31" fill="#001d26"/>
<text x="7" y="27" font-family="Liberation Sans" font-size="20" fill="#31c5f0">Ps</text></svg>
<svg style="left:296px;top:1038px" width="38" height="36" viewBox="0 0 38 36">
<rect x="16" y="4" width="20" height="28" fill="#fff" stroke="#1e7145" stroke-width="1.5"/>
<g stroke="#1e7145" stroke-width="1.4"><line x1="16" y1="10" x2="36" y2="10"/><line x1="16" y1="15" x2="36" y2="15"/><line x1="16" y1="20" x2="36" y2="20"/><line x1="16" y1="25" x2="36" y2="25"/><line x1="25" y1="4" x2="25" y2="32"/></g>
<path d="M0 4 L21 0 V36 L0 32Z" fill="#1e7145"/><text x="2.5" y="26" font-family="Liberation Sans" font-size="19" font-weight="bold" fill="#fff">X</text></svg>
<svg style="left:366px;top:1038px" width="38" height="36" viewBox="0 0 38 36">
<rect x="16" y="4" width="20" height="28" fill="#fff" stroke="#2b579a" stroke-width="1.5"/>
<g stroke="#2b579a" stroke-width="1.6"><line x1="22" y1="10" x2="33" y2="10"/><line x1="22" y1="15" x2="33" y2="15"/><line x1="22" y1="20" x2="33" y2="20"/><line x1="22" y1="25" x2="33" y2="25"/></g>
<path d="M0 4 L21 0 V36 L0 32Z" fill="#2b579a"/><text x="0.5" y="26" font-family="Liberation Sans" font-size="17" font-weight="bold" fill="#fff">W</text></svg>
<div class="t" style="left:1652.00px;top:1047.23px;font-size:13px;color:#e8eef5;transform:scaleX(1.0647);">RU</div>
<svg style="left:1692px;top:1052px" width="12" height="7"><path d="M0 6.5 H12 L6 0.5Z" fill="#f0f4f8"/></svg>
<svg style="left:1721px;top:1044px" width="22" height="24" viewBox="0 0 22 24">
<path d="M2 1 V20" stroke="#f5f5f5" stroke-width="2"/><path d="M3 2 C7 0 10 4 16 2 V11 C10 13 7 9 3 11Z" fill="#f2f2f2"/>
<circle cx="15" cy="17" r="5.5" fill="#e03b3b" stroke="#fff" stroke-width="1"/><path d="M12.5 14.5 L17.5 19.5 M17.5 14.5 L12.5 19.5" stroke="#fff" stroke-width="1.5"/></svg>
<svg style="left:1751px;top:1045px" width="22" height="20" viewBox="0 0 22 20">
<rect x="6" y="4" width="15" height="11" fill="#e5ebf2" stroke="#444" stroke-width="1"/><rect x="8" y="6" width="11" height="7" fill="#7b8ea3"/>
<rect x="10" y="16" width="8" height="2" fill="#ddd"/><rect x="1" y="1" width="4" height="10" fill="#f5f5f5" stroke="#555" stroke-width="0.8"/></svg>
<svg style="left:1782px;top:1046px" width="20" height="18" viewBox="0 0 20 18">
<path d="M1 6 H5 L11 1 V17 L5 12 H1Z" fill="#eef2f6" stroke="#555" stroke-width="0.8"/><path d="M14 6 C15.5 8 15.5 10 14 12" fill="none" stroke="#eee" stroke-width="1.2"/></svg>
<div class="t" style="left:1840.00px;top:1037.97px;font-size:15.5px;color:#fff;transform:scaleX(0.8757);">13:27</div>
<div class="t" style="left:1822.00px;top:1060.27px;font-size:15.5px;color:#fff;transform:scaleX(0.8894);">26.06.2017</div>
<div style="position:absolute;left:1906px;top:1033px;width:14px;height:47px;background:linear-gradient(90deg,#9fb2c6,#c9d7e4);border-left:1px solid #7f93a8"></div>
</body></html>
